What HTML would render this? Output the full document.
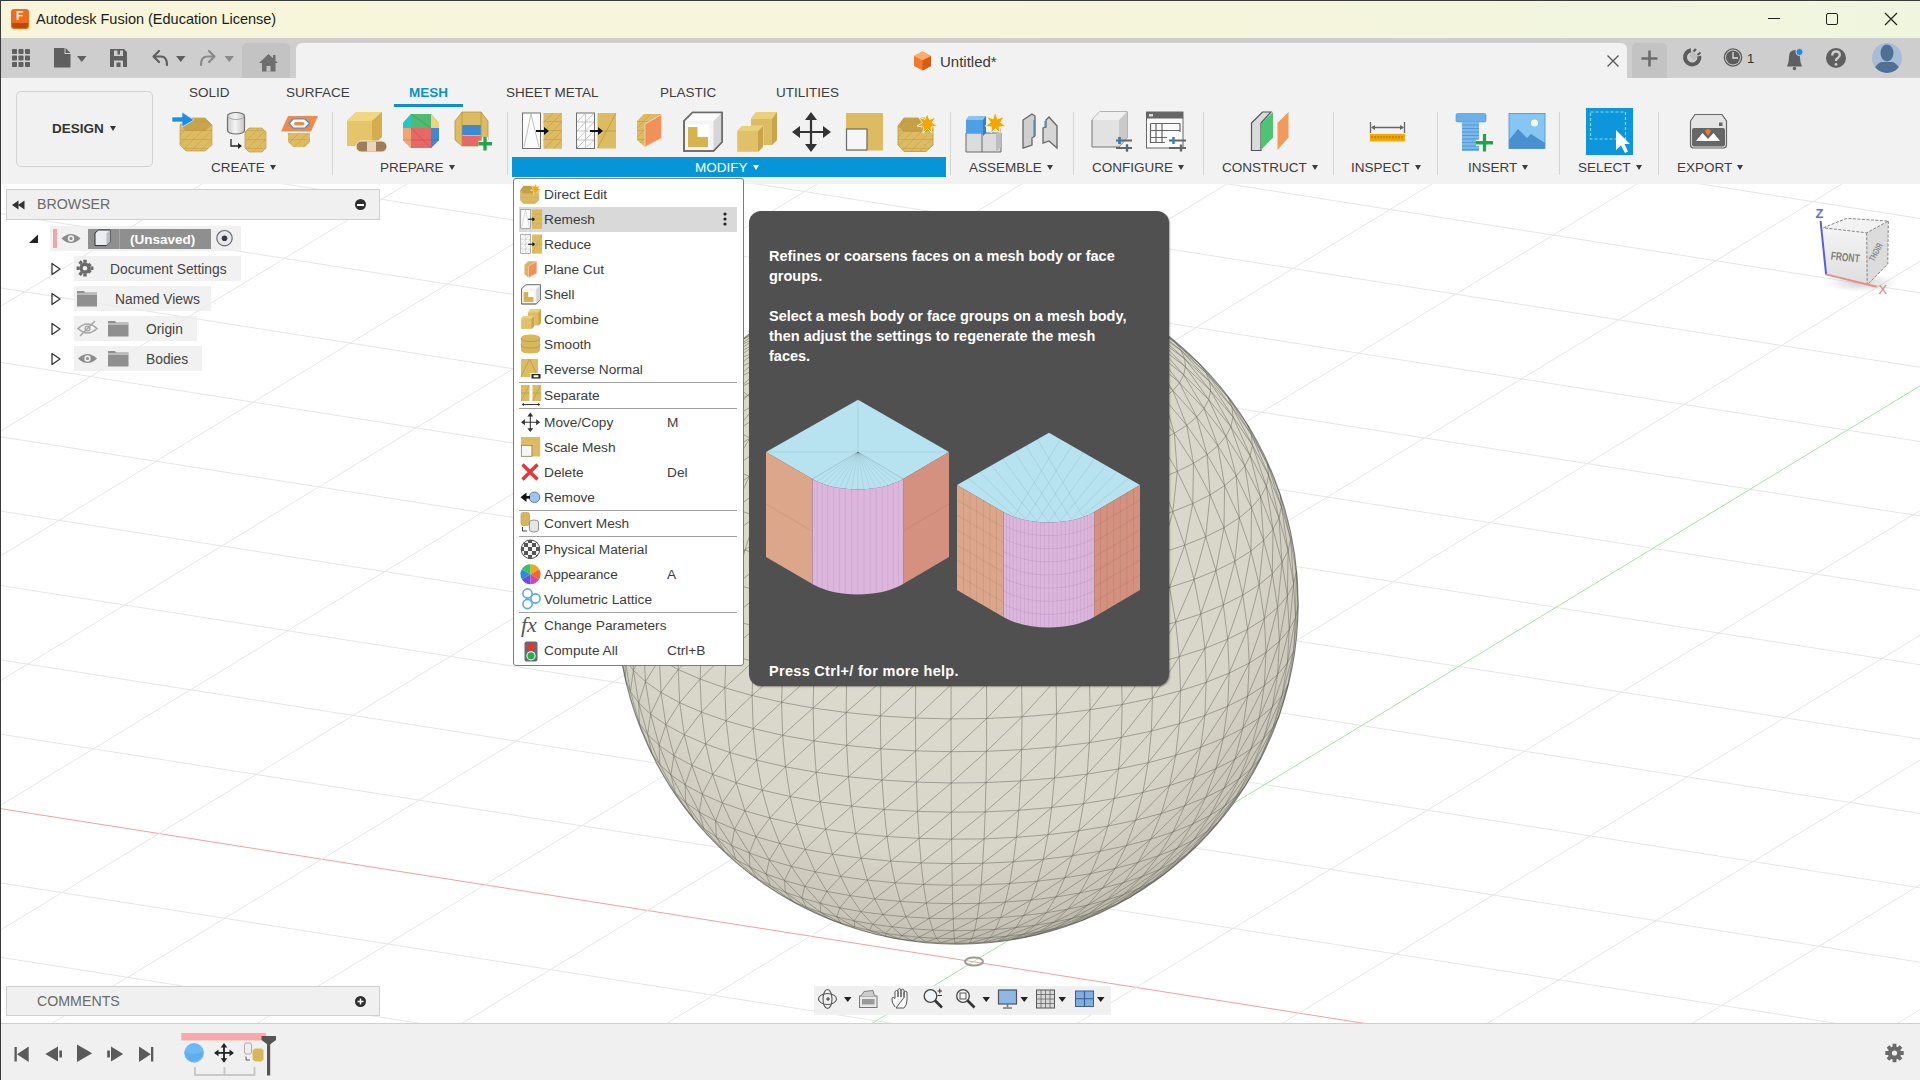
<!DOCTYPE html>
<html><head><meta charset="utf-8">
<style>
*{box-sizing:border-box;margin:0;padding:0}
html,body{width:1920px;height:1080px;overflow:hidden;background:#fff;font-family:"Liberation Sans",sans-serif}
.a{position:absolute}
svg{position:absolute;overflow:visible}
.t{position:absolute;white-space:nowrap;line-height:1}
#title{left:0;top:0;width:1920px;height:38px;background:linear-gradient(90deg,#f8f5da,#f7f5dc 50%,#f0f6de);border-top:1px solid #3b3b3b}
#qat{left:0;top:38px;width:1920px;height:40px;background:#cecece}
#ribbon{left:0;top:78px;width:1920px;height:106px;background:#f2f2f2}
#view{left:0;top:184px;width:1920px;height:840px;background:#fff;overflow:hidden}
#bottom{left:0;top:1023px;width:1920px;height:57px;background:#f0f0f0;border-top:1px solid #cfcfcf}
.tab{font-size:13.5px;color:#3c3c3c;top:85.5px}
.grp{font-size:13.5px;color:#3c3c3c;top:160.5px}
.dd{display:inline-block;width:0;height:0;border-left:3.2px solid transparent;border-right:3.2px solid transparent;border-top:5px solid currentColor;margin-left:5px;vertical-align:2px}
.sep{position:absolute;width:1px;background:#d4d4d4;top:112px;height:63px}
.mi{position:absolute;left:544px;font-size:13.7px;margin-top:1px;color:#3c3c3c;white-space:nowrap;line-height:1}
.ms{position:absolute;left:667px;font-size:13.7px;margin-top:1px;color:#3c3c3c;white-space:nowrap;line-height:1}
.msep{position:absolute;left:519px;width:218px;height:1px;background:#a0a0a0}
.tt{position:absolute;left:769px;font-size:14.5px;font-weight:bold;color:#fff;white-space:nowrap;line-height:1}
</style></head><body>
<!-- viewport -->
<div id="view" class="a">
<svg width="1920" height="840" style="left:0;top:0" viewBox="0 184 1920 840">
<line x1="0" y1="957.2" x2="1920" y2="1259.7" stroke="#e6e6e6" stroke-width="1"/>
<line x1="0" y1="882.9" x2="1920" y2="1185.3" stroke="#e6e6e6" stroke-width="1"/>
<line x1="0" y1="808.5" x2="1920" y2="1110.9" stroke="#f2a0a0" stroke-width="1"/>
<line x1="0" y1="734.1" x2="1920" y2="1036.6" stroke="#e6e6e6" stroke-width="1"/>
<line x1="0" y1="659.8" x2="1920" y2="962.2" stroke="#e6e6e6" stroke-width="1"/>
<line x1="0" y1="585.4" x2="1920" y2="887.8" stroke="#e6e6e6" stroke-width="1"/>
<line x1="0" y1="511.0" x2="1920" y2="813.5" stroke="#e6e6e6" stroke-width="1"/>
<line x1="0" y1="436.7" x2="1920" y2="739.1" stroke="#e6e6e6" stroke-width="1"/>
<line x1="0" y1="362.3" x2="1920" y2="664.7" stroke="#e6e6e6" stroke-width="1"/>
<line x1="0" y1="287.9" x2="1920" y2="590.4" stroke="#e6e6e6" stroke-width="1"/>
<line x1="0" y1="213.6" x2="1920" y2="516.0" stroke="#e6e6e6" stroke-width="1"/>
<line x1="0" y1="139.2" x2="1920" y2="441.6" stroke="#e6e6e6" stroke-width="1"/>
<line x1="0" y1="64.8" x2="1920" y2="367.3" stroke="#e6e6e6" stroke-width="1"/>
<line x1="0" y1="-9.5" x2="1920" y2="292.9" stroke="#e6e6e6" stroke-width="1"/>
<line x1="0" y1="-83.9" x2="1920" y2="218.5" stroke="#e6e6e6" stroke-width="1"/>
<line x1="0" y1="306.8" x2="1920" y2="-861.1" stroke="#e6e6e6" stroke-width="1"/>
<line x1="0" y1="431.5" x2="1920" y2="-736.4" stroke="#e6e6e6" stroke-width="1"/>
<line x1="0" y1="556.2" x2="1920" y2="-611.7" stroke="#e6e6e6" stroke-width="1"/>
<line x1="0" y1="680.9" x2="1920" y2="-487.0" stroke="#e6e6e6" stroke-width="1"/>
<line x1="0" y1="805.6" x2="1920" y2="-362.3" stroke="#e6e6e6" stroke-width="1"/>
<line x1="0" y1="930.3" x2="1920" y2="-237.6" stroke="#e6e6e6" stroke-width="1"/>
<line x1="0" y1="1055.0" x2="1920" y2="-112.9" stroke="#e6e6e6" stroke-width="1"/>
<line x1="0" y1="1179.7" x2="1920" y2="11.8" stroke="#e6e6e6" stroke-width="1"/>
<line x1="0" y1="1304.4" x2="1920" y2="136.5" stroke="#e6e6e6" stroke-width="1"/>
<line x1="0" y1="1429.1" x2="1920" y2="261.2" stroke="#e6e6e6" stroke-width="1"/>
<line x1="0" y1="1553.8" x2="1920" y2="385.9" stroke="#a6e2a6" stroke-width="1"/>
<line x1="0" y1="1678.5" x2="1920" y2="510.6" stroke="#e6e6e6" stroke-width="1"/>
<line x1="0" y1="1803.2" x2="1920" y2="635.3" stroke="#e6e6e6" stroke-width="1"/>
<line x1="0" y1="1927.9" x2="1920" y2="760.0" stroke="#e6e6e6" stroke-width="1"/>
<line x1="0" y1="2052.6" x2="1920" y2="884.8" stroke="#e6e6e6" stroke-width="1"/>
<line x1="0" y1="2177.3" x2="1920" y2="1009.5" stroke="#e6e6e6" stroke-width="1"/>
<defs>
<radialGradient id="sg" cx="0.47" cy="0.40" r="0.62">
<stop offset="0" stop-color="#e0ddd2"/><stop offset="0.75" stop-color="#d8d5c9"/><stop offset="0.93" stop-color="#c8c5b8"/><stop offset="1" stop-color="#aeab9e"/>
</radialGradient>
</defs>
<circle cx="957.5" cy="603.5" r="340.6" fill="url(#sg)"/>
<path d="M886.0 936.4L898.8 938.8M886.0 936.4L869.6 930.4M886.0 936.4L885.3 933.3M898.8 938.8L912.2 940.6M898.8 938.8L885.3 933.3M898.8 938.8L901.8 935.5M912.2 940.6L926.1 942.0M912.2 940.6L901.8 935.5M912.2 940.6L918.9 937.2M926.1 942.0L940.4 942.8M926.1 942.0L918.9 937.2M926.1 942.0L936.5 938.3M940.4 942.8L954.9 943.2M940.4 942.8L936.5 938.3M940.4 942.8L954.3 938.7M954.9 943.2L969.4 943.0M954.9 943.2L954.3 938.7M954.9 943.2L972.1 938.5M969.4 943.0L983.7 942.3M969.4 943.0L972.1 938.5M969.4 943.0L989.7 937.7M983.7 942.3L997.8 941.2M983.7 942.3L989.7 937.7M983.7 942.3L1007.0 936.2M997.8 941.2L1011.4 939.5M997.8 941.2L1007.0 936.2M997.8 941.2L1023.8 934.2M1011.4 939.5L1024.5 937.3M1011.4 939.5L1023.8 934.2M1011.4 939.5L1039.8 931.5M1024.5 937.3L1036.8 934.7M1024.5 937.3L1039.8 931.5M1024.5 937.3L1055.0 928.3M1036.8 934.7L1055.0 928.3M1036.8 934.7L1069.0 924.6M828.8 918.8L841.2 923.2M828.8 918.8L806.2 907.2M828.8 918.8L820.7 912.3M841.2 923.2L854.8 927.0M841.2 923.2L820.7 912.3M841.2 923.2L836.8 916.9M854.8 927.0L869.6 930.4M854.8 927.0L836.8 916.9M854.8 927.0L854.1 920.8M869.6 930.4L885.3 933.3M869.6 930.4L854.1 920.8M869.6 930.4L872.6 924.2M885.3 933.3L901.8 935.5M885.3 933.3L872.6 924.2M885.3 933.3L892.0 926.8M901.8 935.5L918.9 937.2M901.8 935.5L892.0 926.8M901.8 935.5L912.2 928.8M918.9 937.2L936.5 938.3M918.9 937.2L912.2 928.8M918.9 937.2L932.8 930.1M936.5 938.3L954.3 938.7M936.5 938.3L932.8 930.1M936.5 938.3L953.7 930.6M954.3 938.7L972.1 938.5M954.3 938.7L953.7 930.6M954.3 938.7L974.6 930.3M972.1 938.5L989.7 937.7M972.1 938.5L974.6 930.3M972.1 938.5L995.4 929.4M989.7 937.7L1007.0 936.2M989.7 937.7L995.4 929.4M989.7 937.7L1015.7 927.6M1007.0 936.2L1023.8 934.2M1007.0 936.2L1015.7 927.6M1007.0 936.2L1035.4 925.2M1023.8 934.2L1039.8 931.5M1023.8 934.2L1035.4 925.2M1023.8 934.2L1054.3 922.1M1039.8 931.5L1055.0 928.3M1039.8 931.5L1054.3 922.1M1039.8 931.5L1072.1 918.4M1055.0 928.3L1069.0 924.6M1055.0 928.3L1072.1 918.4M1055.0 928.3L1088.6 914.0M1069.0 924.6L1081.9 920.4M1069.0 924.6L1088.6 914.0M1069.0 924.6L1103.7 909.1M1081.9 920.4L1103.7 909.1M1081.9 920.4L1117.2 903.7M793.3 901.6L806.2 907.2M793.3 901.6L770.6 885.8M793.3 901.6L785.3 892.2M806.2 907.2L820.7 912.3M806.2 907.2L785.3 892.2M806.2 907.2L801.8 898.0M820.7 912.3L836.8 916.9M820.7 912.3L801.8 898.0M820.7 912.3L820.1 903.2M836.8 916.9L854.1 920.8M836.8 916.9L820.1 903.2M836.8 916.9L839.8 907.8M854.1 920.8L872.6 924.2M854.1 920.8L839.8 907.8M854.1 920.8L860.9 911.6M872.6 924.2L892.0 926.8M872.6 924.2L860.9 911.6M872.6 924.2L883.0 914.6M892.0 926.8L912.2 928.8M892.0 926.8L883.0 914.6M892.0 926.8L905.9 916.8M912.2 928.8L932.8 930.1M912.2 928.8L905.9 916.8M912.2 928.8L929.4 918.3M932.8 930.1L953.7 930.6M932.8 930.1L929.4 918.3M932.8 930.1L953.2 918.8M953.7 930.6L974.6 930.3M953.7 930.6L953.2 918.8M953.7 930.6L977.0 918.6M974.6 930.3L995.4 929.4M974.6 930.3L977.0 918.6M974.6 930.3L1000.6 917.5M995.4 929.4L1015.7 927.6M995.4 929.4L1000.6 917.5M995.4 929.4L1023.8 915.5M1015.7 927.6L1035.4 925.2M1015.7 927.6L1023.8 915.5M1015.7 927.6L1046.2 912.8M1035.4 925.2L1054.3 922.1M1035.4 925.2L1046.2 912.8M1035.4 925.2L1067.7 909.2M1054.3 922.1L1072.1 918.4M1054.3 922.1L1067.7 909.2M1054.3 922.1L1087.9 905.0M1072.1 918.4L1088.6 914.0M1072.1 918.4L1087.9 905.0M1072.1 918.4L1106.7 900.0M1088.6 914.0L1103.7 909.1M1088.6 914.0L1106.7 900.0M1088.6 914.0L1123.9 894.4M1103.7 909.1L1117.2 903.7M1103.7 909.1L1123.9 894.4M1103.7 909.1L1139.3 888.2M1117.2 903.7L1128.9 897.8M1117.2 903.7L1139.3 888.2M1117.2 903.7L1152.7 881.5M1128.9 897.8L1152.7 881.5M1128.9 897.8L1163.9 874.4M758.0 879.0L770.6 885.8M758.0 879.0L735.9 859.4M758.0 879.0L749.9 867.0M770.6 885.8L785.3 892.2M770.6 885.8L749.9 867.0M770.6 885.8L766.2 874.1M785.3 892.2L801.8 898.0M785.3 892.2L766.2 874.1M785.3 892.2L784.6 880.5M801.8 898.0L820.1 903.2M801.8 898.0L784.6 880.5M801.8 898.0L804.9 886.3M820.1 903.2L839.8 907.8M820.1 903.2L804.9 886.3M820.1 903.2L826.8 891.4M839.8 907.8L860.9 911.6M839.8 907.8L826.8 891.4M839.8 907.8L850.2 895.6M860.9 911.6L883.0 914.6M860.9 911.6L850.2 895.6M860.9 911.6L874.7 899.0M883.0 914.6L905.9 916.8M883.0 914.6L874.7 899.0M883.0 914.6L900.2 901.4M905.9 916.8L929.4 918.3M905.9 916.8L900.2 901.4M905.9 916.8L926.3 903.0M929.4 918.3L953.2 918.8M929.4 918.3L926.3 903.0M929.4 918.3L952.7 903.7M953.2 918.8L977.0 918.6M953.2 918.8L952.7 903.7M953.2 918.8L979.2 903.4M977.0 918.6L1000.6 917.5M977.0 918.6L979.2 903.4M977.0 918.6L1005.4 902.1M1000.6 917.5L1023.8 915.5M1000.6 917.5L1005.4 902.1M1000.6 917.5L1031.1 900.0M1023.8 915.5L1046.2 912.8M1023.8 915.5L1031.1 900.0M1023.8 915.5L1056.0 896.9M1046.2 912.8L1067.7 909.2M1046.2 912.8L1056.0 896.9M1046.2 912.8L1079.9 893.0M1067.7 909.2L1087.9 905.0M1067.7 909.2L1079.9 893.0M1067.7 909.2L1102.4 888.2M1087.9 905.0L1106.7 900.0M1087.9 905.0L1102.4 888.2M1087.9 905.0L1123.3 882.7M1106.7 900.0L1123.9 894.4M1106.7 900.0L1123.3 882.7M1106.7 900.0L1142.3 876.5M1123.9 894.4L1139.3 888.2M1123.9 894.4L1142.3 876.5M1123.9 894.4L1159.4 869.6M1139.3 888.2L1152.7 881.5M1139.3 888.2L1159.4 869.6M1139.3 888.2L1174.3 862.2M1152.7 881.5L1163.9 874.4M1152.7 881.5L1174.3 862.2M1152.7 881.5L1186.7 854.3M1163.9 874.4L1186.7 854.3M1163.9 874.4L1196.7 846.0M724.4 851.3L735.9 859.4M724.4 851.3L703.7 828.2M724.4 851.3L716.3 837.0M735.9 859.4L749.9 867.0M735.9 859.4L716.3 837.0M735.9 859.4L731.5 845.3M749.9 867.0L766.2 874.1M749.9 867.0L731.5 845.3M749.9 867.0L749.3 853.0M766.2 874.1L784.6 880.5M766.2 874.1L749.3 853.0M766.2 874.1L769.3 860.0M784.6 880.5L804.9 886.3M784.6 880.5L769.3 860.0M784.6 880.5L791.3 866.3M804.9 886.3L826.8 891.4M804.9 886.3L791.3 866.3M804.9 886.3L815.2 871.8M826.8 891.4L850.2 895.6M826.8 891.4L815.2 871.8M826.8 891.4L840.7 876.4M850.2 895.6L874.7 899.0M850.2 895.6L840.7 876.4M850.2 895.6L867.4 880.1M874.7 899.0L900.2 901.4M874.7 899.0L867.4 880.1M874.7 899.0L895.1 882.8M900.2 901.4L926.3 903.0M900.2 901.4L895.1 882.8M900.2 901.4L923.5 884.5M926.3 903.0L952.7 903.7M926.3 903.0L923.5 884.5M926.3 903.0L952.3 885.2M952.7 903.7L979.2 903.4M952.7 903.7L952.3 885.2M952.7 903.7L981.1 884.9M979.2 903.4L1005.4 902.1M979.2 903.4L981.1 884.9M979.2 903.4L1009.7 883.5M1005.4 902.1L1031.1 900.0M1005.4 902.1L1009.7 883.5M1005.4 902.1L1037.6 881.2M1031.1 900.0L1056.0 896.9M1031.1 900.0L1037.6 881.2M1031.1 900.0L1064.8 877.8M1056.0 896.9L1079.9 893.0M1056.0 896.9L1064.8 877.8M1056.0 896.9L1090.7 873.6M1079.9 893.0L1102.4 888.2M1079.9 893.0L1090.7 873.6M1079.9 893.0L1115.2 868.4M1102.4 888.2L1123.3 882.7M1102.4 888.2L1115.2 868.4M1102.4 888.2L1138.0 862.4M1123.3 882.7L1142.3 876.5M1123.3 882.7L1138.0 862.4M1123.3 882.7L1158.7 855.6M1142.3 876.5L1159.4 869.6M1142.3 876.5L1158.7 855.6M1142.3 876.5L1177.3 848.2M1159.4 869.6L1174.3 862.2M1159.4 869.6L1177.3 848.2M1159.4 869.6L1193.5 840.1M1174.3 862.2L1186.7 854.3M1174.3 862.2L1193.5 840.1M1174.3 862.2L1207.1 831.4M1186.7 854.3L1196.7 846.0M1186.7 854.3L1207.1 831.4M1186.7 854.3L1217.9 822.4M1196.7 846.0L1217.9 822.4M693.9 819.0L703.7 828.2M693.9 819.0L675.3 792.8M693.9 819.0L685.8 802.6M703.7 828.2L716.3 837.0M703.7 828.2L685.8 802.6M703.7 828.2L699.3 812.0M716.3 837.0L731.5 845.3M716.3 837.0L699.3 812.0M716.3 837.0L715.6 820.9M731.5 845.3L749.3 853.0M731.5 845.3L715.6 820.9M731.5 845.3L734.6 829.2M749.3 853.0L769.3 860.0M749.3 853.0L734.6 829.2M749.3 853.0L756.0 836.7M769.3 860.0L791.3 866.3M769.3 860.0L756.0 836.7M769.3 860.0L779.6 843.4M791.3 866.3L815.2 871.8M791.3 866.3L779.6 843.4M791.3 866.3L805.2 849.3M815.2 871.8L840.7 876.4M815.2 871.8L805.2 849.3M815.2 871.8L832.4 854.2M840.7 876.4L867.4 880.1M840.7 876.4L832.4 854.2M840.7 876.4L861.0 858.2M867.4 880.1L895.1 882.8M867.4 880.1L861.0 858.2M867.4 880.1L890.7 861.1M895.1 882.8L923.5 884.5M895.1 882.8L890.7 861.1M895.1 882.8L921.1 862.9M923.5 884.5L952.3 885.2M923.5 884.5L921.1 862.9M923.5 884.5L951.9 863.6M952.3 885.2L981.1 884.9M952.3 885.2L951.9 863.6M952.3 885.2L982.7 863.3M981.1 884.9L1009.7 883.5M981.1 884.9L982.7 863.3M981.1 884.9L1013.3 861.8M1009.7 883.5L1037.6 881.2M1009.7 883.5L1013.3 861.8M1009.7 883.5L1043.3 859.3M1037.6 881.2L1064.8 877.8M1037.6 881.2L1043.3 859.3M1037.6 881.2L1072.3 855.8M1064.8 877.8L1090.7 873.6M1064.8 877.8L1072.3 855.8M1064.8 877.8L1100.1 851.2M1090.7 873.6L1115.2 868.4M1090.7 873.6L1100.1 851.2M1090.7 873.6L1126.3 845.7M1115.2 868.4L1138.0 862.4M1115.2 868.4L1126.3 845.7M1115.2 868.4L1150.7 839.2M1138.0 862.4L1158.7 855.6M1138.0 862.4L1150.7 839.2M1138.0 862.4L1172.9 832.0M1158.7 855.6L1177.3 848.2M1158.7 855.6L1172.9 832.0M1158.7 855.6L1192.8 824.0M1177.3 848.2L1193.5 840.1M1177.3 848.2L1192.8 824.0M1177.3 848.2L1210.1 815.3M1193.5 840.1L1207.1 831.4M1193.5 840.1L1210.1 815.3M1193.5 840.1L1224.6 806.1M1207.1 831.4L1217.9 822.4M1207.1 831.4L1224.6 806.1M1207.1 831.4L1236.2 796.4M1217.9 822.4L1236.2 796.4M1217.9 822.4L1244.8 786.4M675.3 792.8L685.8 802.6M675.3 792.8L659.8 764.5M675.3 792.8L670.9 774.9M685.8 802.6L699.3 812.0M685.8 802.6L670.9 774.9M685.8 802.6L685.1 784.8M699.3 812.0L715.6 820.9M699.3 812.0L685.1 784.8M699.3 812.0L702.3 794.2M715.6 820.9L734.6 829.2M715.6 820.9L702.3 794.2M715.6 820.9L722.3 802.9M734.6 829.2L756.0 836.7M734.6 829.2L722.3 802.9M734.6 829.2L744.9 810.8M756.0 836.7L779.6 843.4M756.0 836.7L744.9 810.8M756.0 836.7L769.9 817.9M779.6 843.4L805.2 849.3M779.6 843.4L769.9 817.9M779.6 843.4L796.8 824.1M805.2 849.3L832.4 854.2M805.2 849.3L796.8 824.1M805.2 849.3L825.6 829.3M832.4 854.2L861.0 858.2M832.4 854.2L825.6 829.3M832.4 854.2L855.7 833.4M861.0 858.2L890.7 861.1M861.0 858.2L855.7 833.4M861.0 858.2L887.0 836.5M890.7 861.1L921.1 862.9M890.7 861.1L887.0 836.5M890.7 861.1L919.1 838.4M921.1 862.9L951.9 863.6M921.1 862.9L919.1 838.4M921.1 862.9L951.6 839.2M951.9 863.6L982.7 863.3M951.9 863.6L951.6 839.2M951.9 863.6L984.1 838.9M982.7 863.3L1013.3 861.8M982.7 863.3L984.1 838.9M982.7 863.3L1016.4 837.3M1013.3 861.8L1043.3 859.3M1013.3 861.8L1016.4 837.3M1013.3 861.8L1048.0 834.7M1043.3 859.3L1072.3 855.8M1043.3 859.3L1048.0 834.7M1043.3 859.3L1078.6 830.9M1072.3 855.8L1100.1 851.2M1072.3 855.8L1078.6 830.9M1072.3 855.8L1107.9 826.1M1100.1 851.2L1126.3 845.7M1100.1 851.2L1107.9 826.1M1100.1 851.2L1135.6 820.3M1126.3 845.7L1150.7 839.2M1126.3 845.7L1135.6 820.3M1126.3 845.7L1161.3 813.5M1150.7 839.2L1172.9 832.0M1150.7 839.2L1161.3 813.5M1150.7 839.2L1184.7 805.8M1172.9 832.0L1192.8 824.0M1172.9 832.0L1184.7 805.8M1172.9 832.0L1205.7 797.4M1192.8 824.0L1210.1 815.3M1192.8 824.0L1205.7 797.4M1192.8 824.0L1224.0 788.3M1210.1 815.3L1224.6 806.1M1210.1 815.3L1224.0 788.3M1210.1 815.3L1239.3 778.5M1224.6 806.1L1236.2 796.4M1224.6 806.1L1239.3 778.5M1224.6 806.1L1251.5 768.3M1236.2 796.4L1244.8 786.4M1236.2 796.4L1251.5 768.3M1236.2 796.4L1260.6 757.7M1244.8 786.4L1260.6 757.7M652.0 753.8L659.8 764.5M652.0 753.8L639.4 723.3M652.0 753.8L647.6 734.4M659.8 764.5L670.9 774.9M659.8 764.5L647.6 734.4M659.8 764.5L659.1 745.2M670.9 774.9L685.1 784.8M670.9 774.9L659.1 745.2M670.9 774.9L673.9 755.6M685.1 784.8L702.3 794.2M685.1 784.8L673.9 755.6M685.1 784.8L691.9 765.3M702.3 794.2L722.3 802.9M702.3 794.2L691.9 765.3M702.3 794.2L712.7 774.4M722.3 802.9L744.9 810.8M722.3 802.9L712.7 774.4M722.3 802.9L736.2 782.7M744.9 810.8L769.9 817.9M744.9 810.8L736.2 782.7M744.9 810.8L762.1 790.1M769.9 817.9L796.8 824.1M769.9 817.9L762.1 790.1M769.9 817.9L790.2 796.5M796.8 824.1L825.6 829.3M796.8 824.1L790.2 796.5M796.8 824.1L820.1 801.9M825.6 829.3L855.7 833.4M825.6 829.3L820.1 801.9M825.6 829.3L851.6 806.2M855.7 833.4L887.0 836.5M855.7 833.4L851.6 806.2M855.7 833.4L884.1 809.4M887.0 836.5L919.1 838.4M887.0 836.5L884.1 809.4M887.0 836.5L917.5 811.4M919.1 838.4L951.6 839.2M919.1 838.4L917.5 811.4M919.1 838.4L951.3 812.2M951.6 839.2L984.1 838.9M951.6 839.2L951.3 812.2M951.6 839.2L985.2 811.9M984.1 838.9L1016.4 837.3M984.1 838.9L985.2 811.9M984.1 838.9L1018.8 810.3M1016.4 837.3L1048.0 834.7M1016.4 837.3L1018.8 810.3M1016.4 837.3L1051.7 807.5M1048.0 834.7L1078.6 830.9M1048.0 834.7L1051.7 807.5M1048.0 834.7L1083.6 803.6M1078.6 830.9L1107.9 826.1M1078.6 830.9L1083.6 803.6M1078.6 830.9L1114.1 798.6M1107.9 826.1L1135.6 820.3M1107.9 826.1L1114.1 798.6M1107.9 826.1L1142.9 792.5M1135.6 820.3L1161.3 813.5M1135.6 820.3L1142.9 792.5M1135.6 820.3L1169.6 785.5M1161.3 813.5L1184.7 805.8M1161.3 813.5L1169.6 785.5M1161.3 813.5L1194.1 777.5M1184.7 805.8L1205.7 797.4M1184.7 805.8L1194.1 777.5M1184.7 805.8L1215.9 768.7M1205.7 797.4L1224.0 788.3M1205.7 797.4L1215.9 768.7M1205.7 797.4L1234.9 759.2M1224.0 788.3L1239.3 778.5M1224.0 788.3L1234.9 759.2M1224.0 788.3L1250.9 749.1M1239.3 778.5L1251.5 768.3M1239.3 778.5L1250.9 749.1M1239.3 778.5L1263.6 738.4M1251.5 768.3L1260.6 757.7M1251.5 768.3L1263.6 738.4M1251.5 768.3L1273.0 727.4M1260.6 757.7L1273.0 727.4M1260.6 757.7L1279.0 716.1M639.4 723.3L647.6 734.4M639.4 723.3L630.4 691.5M639.4 723.3L638.7 703.0M647.6 734.4L659.1 745.2M647.6 734.4L638.7 703.0M647.6 734.4L650.6 714.1M659.1 745.2L673.9 755.6M659.1 745.2L650.6 714.1M659.1 745.2L665.9 724.7M673.9 755.6L691.9 765.3M673.9 755.6L665.9 724.7M673.9 755.6L684.3 734.7M691.9 765.3L712.7 774.4M691.9 765.3L684.3 734.7M691.9 765.3L705.7 744.0M712.7 774.4L736.2 782.7M712.7 774.4L705.7 744.0M712.7 774.4L729.9 752.5M736.2 782.7L762.1 790.1M736.2 782.7L729.9 752.5M736.2 782.7L756.6 760.1M762.1 790.1L790.2 796.5M762.1 790.1L756.6 760.1M762.1 790.1L785.5 766.8M790.2 796.5L820.1 801.9M790.2 796.5L785.5 766.8M790.2 796.5L816.2 772.3M820.1 801.9L851.6 806.2M820.1 801.9L816.2 772.3M820.1 801.9L848.5 776.8M851.6 806.2L884.1 809.4M851.6 806.2L848.5 776.8M851.6 806.2L882.0 780.0M884.1 809.4L917.5 811.4M884.1 809.4L882.0 780.0M884.1 809.4L916.4 782.1M917.5 811.4L951.3 812.2M917.5 811.4L916.4 782.1M917.5 811.4L951.2 783.0M951.3 812.2L985.2 811.9M951.3 812.2L951.2 783.0M951.3 812.2L986.0 782.6M985.2 811.9L1018.8 810.3M985.2 811.9L986.0 782.6M985.2 811.9L1020.6 780.9M1018.8 810.3L1051.7 807.5M1018.8 810.3L1020.6 780.9M1018.8 810.3L1054.4 778.1M1051.7 807.5L1083.6 803.6M1051.7 807.5L1054.4 778.1M1051.7 807.5L1087.2 774.1M1083.6 803.6L1114.1 798.6M1083.6 803.6L1087.2 774.1M1083.6 803.6L1118.6 768.9M1114.1 798.6L1142.9 792.5M1114.1 798.6L1118.6 768.9M1114.1 798.6L1148.2 762.7M1142.9 792.5L1169.6 785.5M1142.9 792.5L1148.2 762.7M1142.9 792.5L1175.7 755.4M1169.6 785.5L1194.1 777.5M1169.6 785.5L1175.7 755.4M1169.6 785.5L1200.8 747.2M1194.1 777.5L1215.9 768.7M1194.1 777.5L1200.8 747.2M1194.1 777.5L1223.3 738.2M1215.9 768.7L1234.9 759.2M1215.9 768.7L1223.3 738.2M1215.9 768.7L1242.8 728.4M1234.9 759.2L1250.9 749.1M1234.9 759.2L1242.8 728.4M1234.9 759.2L1259.2 718.0M1250.9 749.1L1263.6 738.4M1250.9 749.1L1259.2 718.0M1250.9 749.1L1272.3 707.0M1263.6 738.4L1273.0 727.4M1263.6 738.4L1272.3 707.0M1263.6 738.4L1282.0 695.7M1273.0 727.4L1279.0 716.1M1273.0 727.4L1282.0 695.7M1273.0 727.4L1288.1 684.1M1279.0 716.1L1288.1 684.1M625.6 679.8L630.4 691.5M625.6 679.8L620.0 646.8M625.6 679.8L624.9 658.7M630.4 691.5L638.7 703.0M630.4 691.5L624.9 658.7M630.4 691.5L633.4 670.4M638.7 703.0L650.6 714.1M638.7 703.0L633.4 670.4M638.7 703.0L645.5 681.7M650.6 714.1L665.9 724.7M650.6 714.1L645.5 681.7M650.6 714.1L661.0 692.5M665.9 724.7L684.3 734.7M665.9 724.7L661.0 692.5M665.9 724.7L679.7 702.7M684.3 734.7L705.7 744.0M684.3 734.7L679.7 702.7M684.3 734.7L701.5 712.1M705.7 744.0L729.9 752.5M705.7 744.0L701.5 712.1M705.7 744.0L726.1 720.8M729.9 752.5L756.6 760.1M729.9 752.5L726.1 720.8M729.9 752.5L753.2 728.5M756.6 760.1L785.5 766.8M756.6 760.1L753.2 728.5M756.6 760.1L782.6 735.3M785.5 766.8L816.2 772.3M785.5 766.8L782.6 735.3M785.5 766.8L813.9 740.9M816.2 772.3L848.5 776.8M816.2 772.3L813.9 740.9M816.2 772.3L846.7 745.4M848.5 776.8L882.0 780.0M848.5 776.8L846.7 745.4M848.5 776.8L880.8 748.8M882.0 780.0L916.4 782.1M882.0 780.0L880.8 748.8M882.0 780.0L915.7 750.9M916.4 782.1L951.2 783.0M916.4 782.1L915.7 750.9M916.4 782.1L951.1 751.7M951.2 783.0L986.0 782.6M951.2 783.0L951.1 751.7M951.2 783.0L986.5 751.3M986.0 782.6L1020.6 780.9M986.0 782.6L986.5 751.3M986.0 782.6L1021.6 749.7M1020.6 780.9L1054.4 778.1M1020.6 780.9L1021.6 749.7M1020.6 780.9L1056.0 746.8M1054.4 778.1L1087.2 774.1M1054.4 778.1L1056.0 746.8M1054.4 778.1L1089.4 742.7M1087.2 774.1L1118.6 768.9M1087.2 774.1L1089.4 742.7M1087.2 774.1L1121.3 737.4M1118.6 768.9L1148.2 762.7M1118.6 768.9L1121.3 737.4M1118.6 768.9L1151.4 731.1M1148.2 762.7L1175.7 755.4M1148.2 762.7L1151.4 731.1M1148.2 762.7L1179.3 723.7M1175.7 755.4L1200.8 747.2M1175.7 755.4L1179.3 723.7M1175.7 755.4L1204.9 715.4M1200.8 747.2L1223.3 738.2M1200.8 747.2L1204.9 715.4M1200.8 747.2L1227.7 706.2M1223.3 738.2L1242.8 728.4M1223.3 738.2L1227.7 706.2M1223.3 738.2L1247.6 696.2M1242.8 728.4L1259.2 718.0M1242.8 728.4L1247.6 696.2M1242.8 728.4L1264.3 685.7M1259.2 718.0L1272.3 707.0M1259.2 718.0L1264.3 685.7M1259.2 718.0L1277.6 674.5M1272.3 707.0L1282.0 695.7M1272.3 707.0L1277.6 674.5M1272.3 707.0L1287.4 663.0M1282.0 695.7L1288.1 684.1M1282.0 695.7L1287.4 663.0M1282.0 695.7L1293.6 651.2M1288.1 684.1L1293.6 651.2M620.0 646.8L624.9 658.7M620.0 646.8L618.1 613.4M620.0 646.8L623.1 625.3M624.9 658.7L633.4 670.4M624.9 658.7L623.1 625.3M624.9 658.7L631.6 637.1M633.4 670.4L645.5 681.7M633.4 670.4L631.6 637.1M633.4 670.4L643.8 648.4M645.5 681.7L661.0 692.5M645.5 681.7L643.8 648.4M645.5 681.7L659.3 659.3M661.0 692.5L679.7 702.7M661.0 692.5L659.3 659.3M661.0 692.5L678.2 669.5M679.7 702.7L701.5 712.1M679.7 702.7L678.2 669.5M679.7 702.7L700.1 679.1M701.5 712.1L726.1 720.8M701.5 712.1L700.1 679.1M701.5 712.1L724.8 687.8M726.1 720.8L753.2 728.5M726.1 720.8L724.8 687.8M726.1 720.8L752.1 695.5M753.2 728.5L782.6 735.3M753.2 728.5L752.1 695.5M753.2 728.5L781.6 702.3M782.6 735.3L813.9 740.9M782.6 735.3L781.6 702.3M782.6 735.3L813.1 708.0M813.9 740.9L846.7 745.4M813.9 740.9L813.1 708.0M813.9 740.9L846.1 712.5M846.7 745.4L880.8 748.8M846.7 745.4L846.1 712.5M846.7 745.4L880.4 715.9M880.8 748.8L915.7 750.9M880.8 748.8L880.4 715.9M880.8 748.8L915.5 718.0M915.7 750.9L951.1 751.7M915.7 750.9L915.5 718.0M915.7 750.9L951.0 718.9M951.1 751.7L986.5 751.3M951.1 751.7L951.0 718.9M951.1 751.7L986.7 718.5M986.5 751.3L1021.6 749.7M986.5 751.3L986.7 718.5M986.5 751.3L1022.0 716.8M1021.6 749.7L1056.0 746.8M1021.6 749.7L1022.0 716.8M1021.6 749.7L1056.6 713.9M1056.0 746.8L1089.4 742.7M1056.0 746.8L1056.6 713.9M1056.0 746.8L1090.1 709.8M1089.4 742.7L1121.3 737.4M1089.4 742.7L1090.1 709.8M1089.4 742.7L1122.2 704.5M1121.3 737.4L1151.4 731.1M1121.3 737.4L1122.2 704.5M1121.3 737.4L1152.4 698.1M1151.4 731.1L1179.3 723.7M1151.4 731.1L1152.4 698.1M1151.4 731.1L1180.5 690.7M1179.3 723.7L1204.9 715.4M1179.3 723.7L1180.5 690.7M1179.3 723.7L1206.2 682.3M1204.9 715.4L1227.7 706.2M1204.9 715.4L1206.2 682.3M1204.9 715.4L1229.2 673.1M1227.7 706.2L1247.6 696.2M1227.7 706.2L1229.2 673.1M1227.7 706.2L1249.2 663.1M1247.6 696.2L1264.3 685.7M1247.6 696.2L1249.2 663.1M1247.6 696.2L1266.0 652.4M1264.3 685.7L1277.6 674.5M1264.3 685.7L1266.0 652.4M1264.3 685.7L1279.4 641.2M1277.6 674.5L1287.4 663.0M1277.6 674.5L1279.4 641.2M1277.6 674.5L1289.2 629.6M1287.4 663.0L1293.6 651.2M1287.4 663.0L1289.2 629.6M1287.4 663.0L1295.5 617.7M1293.6 651.2L1295.5 617.7M1293.6 651.2L1298.0 605.7M1298.0 605.7L1296.2 572.2M618.1 613.4L623.1 625.3M618.1 613.4L620.0 579.8M618.1 613.4L624.9 591.7M623.1 625.3L631.6 637.1M623.1 625.3L624.9 591.7M623.1 625.3L633.4 603.4M631.6 637.1L643.8 648.4M631.6 637.1L633.4 603.4M631.6 637.1L645.5 614.7M643.8 648.4L659.3 659.3M643.8 648.4L645.5 614.7M643.8 648.4L661.0 625.5M659.3 659.3L678.2 669.5M659.3 659.3L661.0 625.5M659.3 659.3L679.7 635.7M678.2 669.5L700.1 679.1M678.2 669.5L679.7 635.7M678.2 669.5L701.5 645.1M700.1 679.1L724.8 687.8M700.1 679.1L701.5 645.1M700.1 679.1L726.1 653.8M724.8 687.8L752.1 695.5M724.8 687.8L726.1 653.8M724.8 687.8L753.2 661.5M752.1 695.5L781.6 702.3M752.1 695.5L753.2 661.5M752.1 695.5L782.6 668.3M781.6 702.3L813.1 708.0M781.6 702.3L782.6 668.3M781.6 702.3L813.9 673.9M813.1 708.0L846.1 712.5M813.1 708.0L813.9 673.9M813.1 708.0L846.7 678.4M846.1 712.5L880.4 715.9M846.1 712.5L846.7 678.4M846.1 712.5L880.8 681.8M880.4 715.9L915.5 718.0M880.4 715.9L880.8 681.8M880.4 715.9L915.7 683.9M915.5 718.0L951.0 718.9M915.5 718.0L915.7 683.9M915.5 718.0L951.1 684.7M951.0 718.9L986.7 718.5M951.0 718.9L951.1 684.7M951.0 718.9L986.5 684.3M986.7 718.5L1022.0 716.8M986.7 718.5L986.5 684.3M986.7 718.5L1021.6 682.7M1022.0 716.8L1056.6 713.9M1022.0 716.8L1021.6 682.7M1022.0 716.8L1056.0 679.8M1056.6 713.9L1090.1 709.8M1056.6 713.9L1056.0 679.8M1056.6 713.9L1089.4 675.7M1090.1 709.8L1122.2 704.5M1090.1 709.8L1089.4 675.7M1090.1 709.8L1121.3 670.4M1122.2 704.5L1152.4 698.1M1122.2 704.5L1121.3 670.4M1122.2 704.5L1151.4 664.1M1152.4 698.1L1180.5 690.7M1152.4 698.1L1151.4 664.1M1152.4 698.1L1179.3 656.7M1180.5 690.7L1206.2 682.3M1180.5 690.7L1179.3 656.7M1180.5 690.7L1204.9 648.4M1206.2 682.3L1229.2 673.1M1206.2 682.3L1204.9 648.4M1206.2 682.3L1227.7 639.2M1229.2 673.1L1249.2 663.1M1229.2 673.1L1227.7 639.2M1229.2 673.1L1247.6 629.3M1249.2 663.1L1266.0 652.4M1249.2 663.1L1247.6 629.3M1249.2 663.1L1264.3 618.7M1266.0 652.4L1279.4 641.2M1266.0 652.4L1264.3 618.7M1266.0 652.4L1277.6 607.5M1279.4 641.2L1289.2 629.6M1279.4 641.2L1277.6 607.5M1279.4 641.2L1287.4 596.0M1289.2 629.6L1295.5 617.7M1289.2 629.6L1287.4 596.0M1289.2 629.6L1293.6 584.2M1295.5 617.7L1298.0 605.7M1295.5 617.7L1293.6 584.2M1295.5 617.7L1296.2 572.2M1296.2 572.2L1290.6 539.0M618.8 567.8L620.0 579.8M618.8 567.8L624.4 534.7M618.8 567.8L625.6 546.5M620.0 579.8L624.9 591.7M620.0 579.8L625.6 546.5M620.0 579.8L630.4 558.2M624.9 591.7L633.4 603.4M624.9 591.7L630.4 558.2M624.9 591.7L638.7 569.7M633.4 603.4L645.5 614.7M633.4 603.4L638.7 569.7M633.4 603.4L650.6 580.8M645.5 614.7L661.0 625.5M645.5 614.7L650.6 580.8M645.5 614.7L665.9 591.4M661.0 625.5L679.7 635.7M661.0 625.5L665.9 591.4M661.0 625.5L684.3 601.5M679.7 635.7L701.5 645.1M679.7 635.7L684.3 601.5M679.7 635.7L705.7 610.8M701.5 645.1L726.1 653.8M701.5 645.1L705.7 610.8M701.5 645.1L729.9 619.3M726.1 653.8L753.2 661.5M726.1 653.8L729.9 619.3M726.1 653.8L756.6 626.9M753.2 661.5L782.6 668.3M753.2 661.5L756.6 626.9M753.2 661.5L785.5 633.5M782.6 668.3L813.9 673.9M782.6 668.3L785.5 633.5M782.6 668.3L816.2 639.1M813.9 673.9L846.7 678.4M813.9 673.9L816.2 639.1M813.9 673.9L848.5 643.5M846.7 678.4L880.8 681.8M846.7 678.4L848.5 643.5M846.7 678.4L882.0 646.8M880.8 681.8L915.7 683.9M880.8 681.8L882.0 646.8M880.8 681.8L916.4 648.9M915.7 683.9L951.1 684.7M915.7 683.9L916.4 648.9M915.7 683.9L951.2 649.7M951.1 684.7L986.5 684.3M951.1 684.7L951.2 649.7M951.1 684.7L986.0 649.3M986.5 684.3L1021.6 682.7M986.5 684.3L986.0 649.3M986.5 684.3L1020.6 647.7M1021.6 682.7L1056.0 679.8M1021.6 682.7L1020.6 647.7M1021.6 682.7L1054.4 644.8M1056.0 679.8L1089.4 675.7M1056.0 679.8L1054.4 644.8M1056.0 679.8L1087.2 640.8M1089.4 675.7L1121.3 670.4M1089.4 675.7L1087.2 640.8M1089.4 675.7L1118.6 635.7M1121.3 670.4L1151.4 664.1M1121.3 670.4L1118.6 635.7M1121.3 670.4L1148.2 629.4M1151.4 664.1L1179.3 656.7M1151.4 664.1L1148.2 629.4M1151.4 664.1L1175.7 622.2M1179.3 656.7L1204.9 648.4M1179.3 656.7L1175.7 622.2M1179.3 656.7L1200.8 614.0M1204.9 648.4L1227.7 639.2M1204.9 648.4L1200.8 614.0M1204.9 648.4L1223.3 604.9M1227.7 639.2L1247.6 629.3M1227.7 639.2L1223.3 604.9M1227.7 639.2L1242.8 595.1M1247.6 629.3L1264.3 618.7M1247.6 629.3L1242.8 595.1M1247.6 629.3L1259.2 584.7M1264.3 618.7L1277.6 607.5M1264.3 618.7L1259.2 584.7M1264.3 618.7L1272.3 573.8M1277.6 607.5L1287.4 596.0M1277.6 607.5L1272.3 573.8M1277.6 607.5L1282.0 562.4M1287.4 596.0L1293.6 584.2M1287.4 596.0L1282.0 562.4M1287.4 596.0L1288.1 550.8M1293.6 584.2L1296.2 572.2M1293.6 584.2L1288.1 550.8M1293.6 584.2L1290.6 539.0M1290.6 539.0L1281.4 506.6M1290.6 539.0L1280.2 495.1M624.4 534.7L625.6 546.5M624.4 534.7L633.6 502.4M624.4 534.7L634.8 513.9M625.6 546.5L630.4 558.2M625.6 546.5L634.8 513.9M625.6 546.5L639.4 525.2M630.4 558.2L638.7 569.7M630.4 558.2L639.4 525.2M630.4 558.2L647.6 536.4M638.7 569.7L650.6 580.8M638.7 569.7L647.6 536.4M638.7 569.7L659.1 547.2M650.6 580.8L665.9 591.4M650.6 580.8L659.1 547.2M650.6 580.8L673.9 557.5M665.9 591.4L684.3 601.5M665.9 591.4L673.9 557.5M665.9 591.4L691.9 567.3M684.3 601.5L705.7 610.8M684.3 601.5L691.9 567.3M684.3 601.5L712.7 576.3M705.7 610.8L729.9 619.3M705.7 610.8L712.7 576.3M705.7 610.8L736.2 584.6M729.9 619.3L756.6 626.9M729.9 619.3L736.2 584.6M729.9 619.3L762.1 592.0M756.6 626.9L785.5 633.5M756.6 626.9L762.1 592.0M756.6 626.9L790.2 598.4M785.5 633.5L816.2 639.1M785.5 633.5L790.2 598.4M785.5 633.5L820.1 603.8M816.2 639.1L848.5 643.5M816.2 639.1L820.1 603.8M816.2 639.1L851.6 608.2M848.5 643.5L882.0 646.8M848.5 643.5L851.6 608.2M848.5 643.5L884.1 611.3M882.0 646.8L916.4 648.9M882.0 646.8L884.1 611.3M882.0 646.8L917.5 613.4M916.4 648.9L951.2 649.7M916.4 648.9L917.5 613.4M916.4 648.9L951.3 614.2M951.2 649.7L986.0 649.3M951.2 649.7L951.3 614.2M951.2 649.7L985.2 613.8M986.0 649.3L1020.6 647.7M986.0 649.3L985.2 613.8M986.0 649.3L1018.8 612.2M1020.6 647.7L1054.4 644.8M1020.6 647.7L1018.8 612.2M1020.6 647.7L1051.7 609.5M1054.4 644.8L1087.2 640.8M1054.4 644.8L1051.7 609.5M1054.4 644.8L1083.6 605.5M1087.2 640.8L1118.6 635.7M1087.2 640.8L1083.6 605.5M1087.2 640.8L1114.1 600.5M1118.6 635.7L1148.2 629.4M1118.6 635.7L1114.1 600.5M1118.6 635.7L1142.9 594.5M1148.2 629.4L1175.7 622.2M1148.2 629.4L1142.9 594.5M1148.2 629.4L1169.6 587.4M1175.7 622.2L1200.8 614.0M1175.7 622.2L1169.6 587.4M1175.7 622.2L1194.1 579.4M1200.8 614.0L1223.3 604.9M1200.8 614.0L1194.1 579.4M1200.8 614.0L1215.9 570.6M1223.3 604.9L1242.8 595.1M1223.3 604.9L1215.9 570.6M1223.3 604.9L1234.9 561.1M1242.8 595.1L1259.2 584.7M1242.8 595.1L1234.9 561.1M1242.8 595.1L1250.9 551.0M1259.2 584.7L1272.3 573.8M1259.2 584.7L1250.9 551.0M1259.2 584.7L1263.6 540.4M1272.3 573.8L1282.0 562.4M1272.3 573.8L1263.6 540.4M1272.3 573.8L1273.0 529.3M1282.0 562.4L1288.1 550.8M1282.0 562.4L1273.0 529.3M1282.0 562.4L1279.0 518.0M1288.1 550.8L1290.6 539.0M1288.1 550.8L1279.0 518.0M1288.1 550.8L1281.4 506.6M1281.4 506.6L1280.2 495.1M1281.4 506.6L1268.6 475.2M1281.4 506.6L1267.5 464.1M1280.2 495.1L1267.5 464.1M633.6 502.4L634.8 513.9M633.6 502.4L646.4 471.2M633.6 502.4L647.5 482.2M634.8 513.9L639.4 525.2M634.8 513.9L647.5 482.2M634.8 513.9L652.0 493.1M639.4 525.2L647.6 536.4M639.4 525.2L652.0 493.1M639.4 525.2L659.8 503.8M647.6 536.4L659.1 547.2M647.6 536.4L659.8 503.8M647.6 536.4L670.9 514.2M659.1 547.2L673.9 557.5M659.1 547.2L670.9 514.2M659.1 547.2L685.1 524.1M673.9 557.5L691.9 567.3M673.9 557.5L685.1 524.1M673.9 557.5L702.3 533.5M691.9 567.3L712.7 576.3M691.9 567.3L702.3 533.5M691.9 567.3L722.3 542.2M712.7 576.3L736.2 584.6M712.7 576.3L722.3 542.2M712.7 576.3L744.9 550.1M736.2 584.6L762.1 592.0M736.2 584.6L744.9 550.1M736.2 584.6L769.9 557.2M762.1 592.0L790.2 598.4M762.1 592.0L769.9 557.2M762.1 592.0L796.8 563.4M790.2 598.4L820.1 603.8M790.2 598.4L796.8 563.4M790.2 598.4L825.6 568.6M820.1 603.8L851.6 608.2M820.1 603.8L825.6 568.6M820.1 603.8L855.7 572.8M851.6 608.2L884.1 611.3M851.6 608.2L855.7 572.8M851.6 608.2L887.0 575.8M884.1 611.3L917.5 613.4M884.1 611.3L887.0 575.8M884.1 611.3L919.1 577.7M917.5 613.4L951.3 614.2M917.5 613.4L919.1 577.7M917.5 613.4L951.6 578.5M951.3 614.2L985.2 613.8M951.3 614.2L951.6 578.5M951.3 614.2L984.1 578.2M985.2 613.8L1018.8 612.2M985.2 613.8L984.1 578.2M985.2 613.8L1016.4 576.7M1018.8 612.2L1051.7 609.5M1018.8 612.2L1016.4 576.7M1018.8 612.2L1048.0 574.0M1051.7 609.5L1083.6 605.5M1051.7 609.5L1048.0 574.0M1051.7 609.5L1078.6 570.2M1083.6 605.5L1114.1 600.5M1083.6 605.5L1078.6 570.2M1083.6 605.5L1107.9 565.4M1114.1 600.5L1142.9 594.5M1114.1 600.5L1107.9 565.4M1114.1 600.5L1135.6 559.6M1142.9 594.5L1169.6 587.4M1142.9 594.5L1135.6 559.6M1142.9 594.5L1161.3 552.8M1169.6 587.4L1194.1 579.4M1169.6 587.4L1161.3 552.8M1169.6 587.4L1184.7 545.2M1194.1 579.4L1215.9 570.6M1194.1 579.4L1184.7 545.2M1194.1 579.4L1205.7 536.7M1215.9 570.6L1234.9 561.1M1215.9 570.6L1205.7 536.7M1215.9 570.6L1224.0 527.6M1234.9 561.1L1250.9 551.0M1234.9 561.1L1224.0 527.6M1234.9 561.1L1239.3 517.8M1250.9 551.0L1263.6 540.4M1250.9 551.0L1239.3 517.8M1250.9 551.0L1251.5 507.6M1263.6 540.4L1273.0 529.3M1263.6 540.4L1251.5 507.6M1263.6 540.4L1260.6 497.0M1273.0 529.3L1279.0 518.0M1273.0 529.3L1260.6 497.0M1273.0 529.3L1266.3 486.2M1279.0 518.0L1281.4 506.6M1279.0 518.0L1266.3 486.2M1279.0 518.0L1268.6 475.2M1268.6 475.2L1267.5 464.1M1268.6 475.2L1252.4 445.2M1268.6 475.2L1251.4 434.7M1267.5 464.1L1251.4 434.7M1267.5 464.1L1247.1 424.4M648.7 460.1L646.4 471.2M648.7 460.1L664.8 430.9M648.7 460.1L662.6 441.4M646.4 471.2L647.5 482.2M646.4 471.2L662.6 441.4M646.4 471.2L663.6 451.8M647.5 482.2L652.0 493.1M647.5 482.2L663.6 451.8M647.5 482.2L667.9 462.2M652.0 493.1L659.8 503.8M652.0 493.1L667.9 462.2M652.0 493.1L675.3 472.3M659.8 503.8L670.9 514.2M659.8 503.8L675.3 472.3M659.8 503.8L685.8 482.2M670.9 514.2L685.1 524.1M670.9 514.2L685.8 482.2M670.9 514.2L699.3 491.6M685.1 524.1L702.3 533.5M685.1 524.1L699.3 491.6M685.1 524.1L715.6 500.4M702.3 533.5L722.3 542.2M702.3 533.5L715.6 500.4M702.3 533.5L734.6 508.7M722.3 542.2L744.9 550.1M722.3 542.2L734.6 508.7M722.3 542.2L756.0 516.2M744.9 550.1L769.9 557.2M744.9 550.1L756.0 516.2M744.9 550.1L779.6 523.0M769.9 557.2L796.8 563.4M769.9 557.2L779.6 523.0M769.9 557.2L805.2 528.8M796.8 563.4L825.6 568.6M796.8 563.4L805.2 528.8M796.8 563.4L832.4 533.8M825.6 568.6L855.7 572.8M825.6 568.6L832.4 533.8M825.6 568.6L861.0 537.7M855.7 572.8L887.0 575.8M855.7 572.8L861.0 537.7M855.7 572.8L890.7 540.6M887.0 575.8L919.1 577.7M887.0 575.8L890.7 540.6M887.0 575.8L921.1 542.4M919.1 577.7L951.6 578.5M919.1 577.7L921.1 542.4M919.1 577.7L951.9 543.2M951.6 578.5L984.1 578.2M951.6 578.5L951.9 543.2M951.6 578.5L982.7 542.8M984.1 578.2L1016.4 576.7M984.1 578.2L982.7 542.8M984.1 578.2L1013.3 541.4M1016.4 576.7L1048.0 574.0M1016.4 576.7L1013.3 541.4M1016.4 576.7L1043.3 538.9M1048.0 574.0L1078.6 570.2M1048.0 574.0L1043.3 538.9M1048.0 574.0L1072.3 535.3M1078.6 570.2L1107.9 565.4M1078.6 570.2L1072.3 535.3M1078.6 570.2L1100.1 530.7M1107.9 565.4L1135.6 559.6M1107.9 565.4L1100.1 530.7M1107.9 565.4L1126.3 525.2M1135.6 559.6L1161.3 552.8M1135.6 559.6L1126.3 525.2M1135.6 559.6L1150.7 518.8M1161.3 552.8L1184.7 545.2M1161.3 552.8L1150.7 518.8M1161.3 552.8L1172.9 511.5M1184.7 545.2L1205.7 536.7M1184.7 545.2L1172.9 511.5M1184.7 545.2L1192.8 503.5M1205.7 536.7L1224.0 527.6M1205.7 536.7L1192.8 503.5M1205.7 536.7L1210.1 494.9M1224.0 527.6L1239.3 517.8M1224.0 527.6L1210.1 494.9M1224.0 527.6L1224.6 485.6M1239.3 517.8L1251.5 507.6M1239.3 517.8L1224.6 485.6M1239.3 517.8L1236.2 475.9M1251.5 507.6L1260.6 497.0M1251.5 507.6L1236.2 475.9M1251.5 507.6L1244.8 465.9M1260.6 497.0L1266.3 486.2M1260.6 497.0L1244.8 465.9M1260.6 497.0L1250.2 455.6M1266.3 486.2L1268.6 475.2M1266.3 486.2L1250.2 455.6M1266.3 486.2L1252.4 445.2M1252.4 445.2L1251.4 434.7M1252.4 445.2L1233.0 416.9M1252.4 445.2L1232.0 407.1M1251.4 434.7L1247.1 424.4M1251.4 434.7L1232.0 407.1M1251.4 434.7L1228.1 397.5M1247.1 424.4L1228.1 397.5M664.8 430.9L662.6 441.4M664.8 430.9L684.1 403.6M664.8 430.9L682.0 413.4M662.6 441.4L663.6 451.8M662.6 441.4L682.0 413.4M662.6 441.4L683.0 423.1M663.6 451.8L667.9 462.2M663.6 451.8L683.0 423.1M663.6 451.8L686.9 432.8M667.9 462.2L675.3 472.3M667.9 462.2L686.9 432.8M667.9 462.2L693.9 442.3M675.3 472.3L685.8 482.2M675.3 472.3L693.9 442.3M675.3 472.3L703.7 451.5M685.8 482.2L699.3 491.6M685.8 482.2L703.7 451.5M685.8 482.2L716.3 460.3M699.3 491.6L715.6 500.4M699.3 491.6L716.3 460.3M699.3 491.6L731.5 468.6M715.6 500.4L734.6 508.7M715.6 500.4L731.5 468.6M715.6 500.4L749.3 476.3M734.6 508.7L756.0 516.2M734.6 508.7L749.3 476.3M734.6 508.7L769.3 483.3M756.0 516.2L779.6 523.0M756.0 516.2L769.3 483.3M756.0 516.2L791.3 489.6M779.6 523.0L805.2 528.8M779.6 523.0L791.3 489.6M779.6 523.0L815.2 495.1M805.2 528.8L832.4 533.8M805.2 528.8L815.2 495.1M805.2 528.8L840.7 499.7M832.4 533.8L861.0 537.7M832.4 533.8L840.7 499.7M832.4 533.8L867.4 503.3M861.0 537.7L890.7 540.6M861.0 537.7L867.4 503.3M861.0 537.7L895.1 506.1M890.7 540.6L921.1 542.4M890.7 540.6L895.1 506.1M890.7 540.6L923.5 507.8M921.1 542.4L951.9 543.2M921.1 542.4L923.5 507.8M921.1 542.4L952.3 508.5M951.9 543.2L982.7 542.8M951.9 543.2L952.3 508.5M951.9 543.2L981.1 508.1M982.7 542.8L1013.3 541.4M982.7 542.8L981.1 508.1M982.7 542.8L1009.7 506.8M1013.3 541.4L1043.3 538.9M1013.3 541.4L1009.7 506.8M1013.3 541.4L1037.6 504.4M1043.3 538.9L1072.3 535.3M1043.3 538.9L1037.6 504.4M1043.3 538.9L1064.8 501.1M1072.3 535.3L1100.1 530.7M1072.3 535.3L1064.8 501.1M1072.3 535.3L1090.7 496.8M1100.1 530.7L1126.3 525.2M1100.1 530.7L1090.7 496.8M1100.1 530.7L1115.2 491.7M1126.3 525.2L1150.7 518.8M1126.3 525.2L1115.2 491.7M1126.3 525.2L1138.0 485.7M1150.7 518.8L1172.9 511.5M1150.7 518.8L1138.0 485.7M1150.7 518.8L1158.7 478.9M1172.9 511.5L1192.8 503.5M1172.9 511.5L1158.7 478.9M1172.9 511.5L1177.3 471.4M1192.8 503.5L1210.1 494.9M1192.8 503.5L1177.3 471.4M1192.8 503.5L1193.5 463.3M1210.1 494.9L1224.6 485.6M1210.1 494.9L1193.5 463.3M1210.1 494.9L1207.1 454.7M1224.6 485.6L1236.2 475.9M1224.6 485.6L1207.1 454.7M1224.6 485.6L1217.9 445.7M1236.2 475.9L1244.8 465.9M1236.2 475.9L1217.9 445.7M1236.2 475.9L1225.9 436.3M1244.8 465.9L1250.2 455.6M1244.8 465.9L1225.9 436.3M1244.8 465.9L1230.9 426.7M1250.2 455.6L1252.4 445.2M1250.2 455.6L1230.9 426.7M1250.2 455.6L1233.0 416.9M1233.0 416.9L1232.0 407.1M1233.0 416.9L1210.6 390.7M1233.0 416.9L1209.7 381.7M1232.0 407.1L1228.1 397.5M1232.0 407.1L1209.7 381.7M1232.0 407.1L1206.0 372.8M1228.1 397.5L1206.0 372.8M1228.1 397.5L1199.7 364.1M689.1 394.0L684.1 403.6M689.1 394.0L711.0 369.6M689.1 394.0L706.3 378.5M684.1 403.6L682.0 413.4M684.1 403.6L706.3 378.5M684.1 403.6L704.4 387.4M682.0 413.4L683.0 423.1M682.0 413.4L704.4 387.4M682.0 413.4L705.3 396.4M683.0 423.1L686.9 432.8M683.0 423.1L705.3 396.4M683.0 423.1L709.0 405.3M686.9 432.8L693.9 442.3M686.9 432.8L709.0 405.3M686.9 432.8L715.3 414.0M693.9 442.3L703.7 451.5M693.9 442.3L715.3 414.0M693.9 442.3L724.4 422.4M703.7 451.5L716.3 460.3M703.7 451.5L724.4 422.4M703.7 451.5L735.9 430.5M716.3 460.3L731.5 468.6M716.3 460.3L735.9 430.5M716.3 460.3L749.9 438.1M731.5 468.6L749.3 476.3M731.5 468.6L749.9 438.1M731.5 468.6L766.2 445.2M749.3 476.3L769.3 483.3M749.3 476.3L766.2 445.2M749.3 476.3L784.6 451.7M769.3 483.3L791.3 489.6M769.3 483.3L784.6 451.7M769.3 483.3L804.9 457.5M791.3 489.6L815.2 495.1M791.3 489.6L804.9 457.5M791.3 489.6L826.8 462.5M815.2 495.1L840.7 499.7M815.2 495.1L826.8 462.5M815.2 495.1L850.2 466.7M840.7 499.7L867.4 503.3M840.7 499.7L850.2 466.7M840.7 499.7L874.7 470.1M867.4 503.3L895.1 506.1M867.4 503.3L874.7 470.1M867.4 503.3L900.2 472.6M895.1 506.1L923.5 507.8M895.1 506.1L900.2 472.6M895.1 506.1L926.3 474.2M923.5 507.8L952.3 508.5M923.5 507.8L926.3 474.2M923.5 507.8L952.7 474.8M952.3 508.5L981.1 508.1M952.3 508.5L952.7 474.8M952.3 508.5L979.2 474.5M981.1 508.1L1009.7 506.8M981.1 508.1L979.2 474.5M981.1 508.1L1005.4 473.3M1009.7 506.8L1037.6 504.4M1009.7 506.8L1005.4 473.3M1009.7 506.8L1031.1 471.1M1037.6 504.4L1064.8 501.1M1037.6 504.4L1031.1 471.1M1037.6 504.4L1056.0 468.0M1064.8 501.1L1090.7 496.8M1064.8 501.1L1056.0 468.0M1064.8 501.1L1079.9 464.1M1090.7 496.8L1115.2 491.7M1090.7 496.8L1079.9 464.1M1090.7 496.8L1102.4 459.4M1115.2 491.7L1138.0 485.7M1115.2 491.7L1102.4 459.4M1115.2 491.7L1123.3 453.9M1138.0 485.7L1158.7 478.9M1138.0 485.7L1123.3 453.9M1138.0 485.7L1142.3 447.6M1158.7 478.9L1177.3 471.4M1158.7 478.9L1142.3 447.6M1158.7 478.9L1159.4 440.8M1177.3 471.4L1193.5 463.3M1177.3 471.4L1159.4 440.8M1177.3 471.4L1174.3 433.3M1193.5 463.3L1207.1 454.7M1193.5 463.3L1174.3 433.3M1193.5 463.3L1186.7 425.4M1207.1 454.7L1217.9 445.7M1207.1 454.7L1186.7 425.4M1207.1 454.7L1196.7 417.1M1217.9 445.7L1225.9 436.3M1217.9 445.7L1196.7 417.1M1217.9 445.7L1204.0 408.5M1225.9 436.3L1230.9 426.7M1225.9 436.3L1204.0 408.5M1225.9 436.3L1208.7 399.7M1230.9 426.7L1233.0 416.9M1230.9 426.7L1208.7 399.7M1230.9 426.7L1210.6 390.7M1210.6 390.7L1209.7 381.7M1210.6 390.7L1185.4 366.8M1210.6 390.7L1184.6 358.7M1209.7 381.7L1206.0 372.8M1209.7 381.7L1184.6 358.7M1209.7 381.7L1181.3 350.7M1206.0 372.8L1199.7 364.1M1206.0 372.8L1181.3 350.7M1206.0 372.8L1175.6 342.9M1199.7 364.1L1175.6 342.9M1199.7 364.1L1167.4 335.3M711.0 369.6L706.3 378.5M711.0 369.6L735.5 347.9M711.0 369.6L731.3 355.8M706.3 378.5L704.4 387.4M706.3 378.5L731.3 355.8M706.3 378.5L729.6 363.9M704.4 387.4L705.3 396.4M704.4 387.4L729.6 363.9M704.4 387.4L730.4 372.0M705.3 396.4L709.0 405.3M705.3 396.4L730.4 372.0M705.3 396.4L733.7 380.0M709.0 405.3L715.3 414.0M709.0 405.3L733.7 380.0M709.0 405.3L739.4 387.8M715.3 414.0L724.4 422.4M715.3 414.0L739.4 387.8M715.3 414.0L747.6 395.4M724.4 422.4L735.9 430.5M724.4 422.4L747.6 395.4M724.4 422.4L758.0 402.7M735.9 430.5L749.9 438.1M735.9 430.5L758.0 402.7M735.9 430.5L770.6 409.5M749.9 438.1L766.2 445.2M749.9 438.1L770.6 409.5M749.9 438.1L785.3 415.9M766.2 445.2L784.6 451.7M766.2 445.2L785.3 415.9M766.2 445.2L801.8 421.7M784.6 451.7L804.9 457.5M784.6 451.7L801.8 421.7M784.6 451.7L820.1 426.9M804.9 457.5L826.8 462.5M804.9 457.5L820.1 426.9M804.9 457.5L839.8 431.5M826.8 462.5L850.2 466.7M826.8 462.5L839.8 431.5M826.8 462.5L860.9 435.3M850.2 466.7L874.7 470.1M850.2 466.7L860.9 435.3M850.2 466.7L883.0 438.3M874.7 470.1L900.2 472.6M874.7 470.1L883.0 438.3M874.7 470.1L905.9 440.5M900.2 472.6L926.3 474.2M900.2 472.6L905.9 440.5M900.2 472.6L929.4 442.0M926.3 474.2L952.7 474.8M926.3 474.2L929.4 442.0M926.3 474.2L953.2 442.5M952.7 474.8L979.2 474.5M952.7 474.8L953.2 442.5M952.7 474.8L977.0 442.3M979.2 474.5L1005.4 473.3M979.2 474.5L977.0 442.3M979.2 474.5L1000.6 441.2M1005.4 473.3L1031.1 471.1M1005.4 473.3L1000.6 441.2M1005.4 473.3L1023.8 439.2M1031.1 471.1L1056.0 468.0M1031.1 471.1L1023.8 439.2M1031.1 471.1L1046.2 436.5M1056.0 468.0L1079.9 464.1M1056.0 468.0L1046.2 436.5M1056.0 468.0L1067.7 432.9M1079.9 464.1L1102.4 459.4M1079.9 464.1L1067.7 432.9M1079.9 464.1L1087.9 428.7M1102.4 459.4L1123.3 453.9M1102.4 459.4L1087.9 428.7M1102.4 459.4L1106.7 423.7M1123.3 453.9L1142.3 447.6M1123.3 453.9L1106.7 423.7M1123.3 453.9L1123.9 418.1M1142.3 447.6L1159.4 440.8M1142.3 447.6L1123.9 418.1M1142.3 447.6L1139.3 411.9M1159.4 440.8L1174.3 433.3M1159.4 440.8L1139.3 411.9M1159.4 440.8L1152.7 405.2M1174.3 433.3L1186.7 425.4M1174.3 433.3L1152.7 405.2M1174.3 433.3L1163.9 398.1M1186.7 425.4L1196.7 417.1M1186.7 425.4L1163.9 398.1M1186.7 425.4L1172.9 390.6M1196.7 417.1L1204.0 408.5M1196.7 417.1L1172.9 390.6M1196.7 417.1L1179.5 382.8M1204.0 408.5L1208.7 399.7M1204.0 408.5L1179.5 382.8M1204.0 408.5L1183.7 374.9M1208.7 399.7L1210.6 390.7M1208.7 399.7L1183.7 374.9M1208.7 399.7L1185.4 366.8M1185.4 366.8L1184.6 358.7M1185.4 366.8L1157.7 345.5M1185.4 366.8L1157.0 338.4M1184.6 358.7L1181.3 350.7M1184.6 358.7L1157.0 338.4M1184.6 358.7L1154.1 331.4M1181.3 350.7L1175.6 342.9M1181.3 350.7L1154.1 331.4M1181.3 350.7L1149.0 324.5M1175.6 342.9L1167.4 335.3M1175.6 342.9L1149.0 324.5M1175.6 342.9L1141.9 317.8M1167.4 335.3L1141.9 317.8M1167.4 335.3L1132.8 311.5M742.1 340.1L735.5 347.9M742.1 340.1L768.3 322.1M742.1 340.1L762.5 328.9M735.5 347.9L731.3 355.8M735.5 347.9L762.5 328.9M735.5 347.9L758.8 335.9M731.3 355.8L729.6 363.9M731.3 355.8L758.8 335.9M731.3 355.8L757.3 342.9M729.6 363.9L730.4 372.0M729.6 363.9L757.3 342.9M729.6 363.9L758.0 350.0M730.4 372.0L733.7 380.0M730.4 372.0L758.0 350.0M730.4 372.0L760.9 357.1M733.7 380.0L739.4 387.8M733.7 380.0L760.9 357.1M733.7 380.0L766.0 364.0M739.4 387.8L747.6 395.4M739.4 387.8L766.0 364.0M739.4 387.8L773.1 370.6M747.6 395.4L758.0 402.7M747.6 395.4L773.1 370.6M747.6 395.4L782.2 377.0M758.0 402.7L770.6 409.5M758.0 402.7L782.2 377.0M758.0 402.7L793.3 383.0M770.6 409.5L785.3 415.9M770.6 409.5L793.3 383.0M770.6 409.5L806.2 388.6M785.3 415.9L801.8 421.7M785.3 415.9L806.2 388.6M785.3 415.9L820.7 393.8M801.8 421.7L820.1 426.9M801.8 421.7L820.7 393.8M801.8 421.7L836.8 398.3M820.1 426.9L839.8 431.5M820.1 426.9L836.8 398.3M820.1 426.9L854.1 402.3M839.8 431.5L860.9 435.3M839.8 431.5L854.1 402.3M839.8 431.5L872.6 405.7M860.9 435.3L883.0 438.3M860.9 435.3L872.6 405.7M860.9 435.3L892.0 408.3M883.0 438.3L905.9 440.5M883.0 438.3L892.0 408.3M883.0 438.3L912.2 410.3M905.9 440.5L929.4 442.0M905.9 440.5L912.2 410.3M905.9 440.5L932.8 411.5M929.4 442.0L953.2 442.5M929.4 442.0L932.8 411.5M929.4 442.0L953.7 412.0M953.2 442.5L977.0 442.3M953.2 442.5L953.7 412.0M953.2 442.5L974.6 411.8M977.0 442.3L1000.6 441.2M977.0 442.3L974.6 411.8M977.0 442.3L995.4 410.8M1000.6 441.2L1023.8 439.2M1000.6 441.2L995.4 410.8M1000.6 441.2L1015.7 409.1M1023.8 439.2L1046.2 436.5M1023.8 439.2L1015.7 409.1M1023.8 439.2L1035.4 406.7M1046.2 436.5L1067.7 432.9M1046.2 436.5L1035.4 406.7M1046.2 436.5L1054.3 403.6M1067.7 432.9L1087.9 428.7M1067.7 432.9L1054.3 403.6M1067.7 432.9L1072.1 399.9M1087.9 428.7L1106.7 423.7M1087.9 428.7L1072.1 399.9M1087.9 428.7L1088.6 395.5M1106.7 423.7L1123.9 418.1M1106.7 423.7L1088.6 395.5M1106.7 423.7L1103.7 390.6M1123.9 418.1L1139.3 411.9M1123.9 418.1L1103.7 390.6M1123.9 418.1L1117.2 385.1M1139.3 411.9L1152.7 405.2M1139.3 411.9L1117.2 385.1M1139.3 411.9L1128.9 379.3M1152.7 405.2L1163.9 398.1M1152.7 405.2L1128.9 379.3M1152.7 405.2L1138.8 373.0M1163.9 398.1L1172.9 390.6M1163.9 398.1L1138.8 373.0M1163.9 398.1L1146.7 366.4M1172.9 390.6L1179.5 382.8M1172.9 390.6L1146.7 366.4M1172.9 390.6L1152.5 359.6M1179.5 382.8L1183.7 374.9M1179.5 382.8L1152.5 359.6M1179.5 382.8L1156.2 352.6M1183.7 374.9L1185.4 366.8M1183.7 374.9L1156.2 352.6M1183.7 374.9L1157.7 345.5M1157.7 345.5L1157.0 338.4M1157.7 345.5L1127.8 327.1M1157.7 345.5L1127.2 321.0M1157.0 338.4L1154.1 331.4M1157.0 338.4L1127.2 321.0M1157.0 338.4L1124.7 315.1M1154.1 331.4L1149.0 324.5M1154.1 331.4L1124.7 315.1M1154.1 331.4L1120.4 309.2M1149.0 324.5L1141.9 317.8M1149.0 324.5L1120.4 309.2M1149.0 324.5L1114.4 303.5M1141.9 317.8L1132.8 311.5M1141.9 317.8L1114.4 303.5M1141.9 317.8L1106.6 298.1M1132.8 311.5L1106.6 298.1M1132.8 311.5L1097.2 293.0M776.2 315.5L768.3 322.1M776.2 315.5L803.3 301.5M776.2 315.5L796.6 307.1M768.3 322.1L762.5 328.9M768.3 322.1L796.6 307.1M768.3 322.1L791.6 312.9M762.5 328.9L758.8 335.9M762.5 328.9L791.6 312.9M762.5 328.9L788.5 318.8M758.8 335.9L757.3 342.9M758.8 335.9L788.5 318.8M758.8 335.9L787.2 324.9M757.3 342.9L758.0 350.0M757.3 342.9L787.2 324.9M757.3 342.9L787.8 330.9M758.0 350.0L760.9 357.1M758.0 350.0L787.8 330.9M758.0 350.0L790.3 336.9M760.9 357.1L766.0 364.0M760.9 357.1L790.3 336.9M760.9 357.1L794.6 342.7M766.0 364.0L773.1 370.6M766.0 364.0L794.6 342.7M766.0 364.0L800.6 348.4M773.1 370.6L782.2 377.0M773.1 370.6L800.6 348.4M773.1 370.6L808.4 353.9M782.2 377.0L793.3 383.0M782.2 377.0L808.4 353.9M782.2 377.0L817.8 359.0M793.3 383.0L806.2 388.6M793.3 383.0L817.8 359.0M793.3 383.0L828.8 363.7M806.2 388.6L820.7 393.8M806.2 388.6L828.8 363.7M806.2 388.6L841.2 368.1M820.7 393.8L836.8 398.3M820.7 393.8L841.2 368.1M820.7 393.8L854.8 372.0M836.8 398.3L854.1 402.3M836.8 398.3L854.8 372.0M836.8 398.3L869.6 375.4M854.1 402.3L872.6 405.7M854.1 402.3L869.6 375.4M854.1 402.3L885.3 378.2M872.6 405.7L892.0 408.3M872.6 405.7L885.3 378.2M872.6 405.7L901.8 380.5M892.0 408.3L912.2 410.3M892.0 408.3L901.8 380.5M892.0 408.3L918.9 382.2M912.2 410.3L932.8 411.5M912.2 410.3L918.9 382.2M912.2 410.3L936.5 383.2M932.8 411.5L953.7 412.0M932.8 411.5L936.5 383.2M932.8 411.5L954.3 383.6M953.7 412.0L974.6 411.8M953.7 412.0L954.3 383.6M953.7 412.0L972.1 383.4M974.6 411.8L995.4 410.8M974.6 411.8L972.1 383.4M974.6 411.8L989.7 382.6M995.4 410.8L1015.7 409.1M995.4 410.8L989.7 382.6M995.4 410.8L1007.0 381.2M1015.7 409.1L1035.4 406.7M1015.7 409.1L1007.0 381.2M1015.7 409.1L1023.8 379.1M1035.4 406.7L1054.3 403.6M1035.4 406.7L1023.8 379.1M1035.4 406.7L1039.8 376.5M1054.3 403.6L1072.1 399.9M1054.3 403.6L1039.8 376.5M1054.3 403.6L1055.0 373.3M1072.1 399.9L1088.6 395.5M1072.1 399.9L1055.0 373.3M1072.1 399.9L1069.0 369.6M1088.6 395.5L1103.7 390.6M1088.6 395.5L1069.0 369.6M1088.6 395.5L1081.9 365.4M1103.7 390.6L1117.2 385.1M1103.7 390.6L1081.9 365.4M1103.7 390.6L1093.3 360.8M1117.2 385.1L1128.9 379.3M1117.2 385.1L1093.3 360.8M1117.2 385.1L1103.3 355.8M1128.9 379.3L1138.8 373.0M1128.9 379.3L1103.3 355.8M1128.9 379.3L1111.7 350.4M1138.8 373.0L1146.7 366.4M1138.8 373.0L1111.7 350.4M1138.8 373.0L1118.4 344.8M1146.7 366.4L1152.5 359.6M1146.7 366.4L1118.4 344.8M1146.7 366.4L1123.4 339.0M1152.5 359.6L1156.2 352.6M1152.5 359.6L1123.4 339.0M1152.5 359.6L1126.5 333.1M1156.2 352.6L1157.7 345.5M1156.2 352.6L1126.5 333.1M1156.2 352.6L1127.8 327.1M1127.8 327.1L1127.2 321.0M1127.8 327.1L1096.0 311.6M1127.8 327.1L1095.5 306.7M1127.2 321.0L1124.7 315.1M1127.2 321.0L1095.5 306.7M1127.2 321.0L1093.5 301.9M1124.7 315.1L1120.4 309.2M1124.7 315.1L1093.5 301.9M1124.7 315.1L1090.0 297.1M1120.4 309.2L1114.4 303.5M1120.4 309.2L1090.0 297.1M1120.4 309.2L1085.1 292.5M1114.4 303.5L1106.6 298.1M1114.4 303.5L1085.1 292.5M1114.4 303.5L1078.8 288.1M1106.6 298.1L1097.2 293.0M1106.6 298.1L1078.8 288.1M1106.6 298.1L1071.1 283.9M1097.2 293.0L1071.1 283.9M1097.2 293.0L1062.2 280.0M821.7 291.2L811.7 296.2M821.7 291.2L847.0 282.4M821.7 291.2L838.9 286.5M811.7 296.2L803.3 301.5M811.7 296.2L838.9 286.5M811.7 296.2L832.0 290.8M803.3 301.5L796.6 307.1M803.3 301.5L832.0 290.8M803.3 301.5L826.6 295.4M796.6 307.1L791.6 312.9M796.6 307.1L826.6 295.4M796.6 307.1L822.6 300.1M791.6 312.9L788.5 318.8M791.6 312.9L822.6 300.1M791.6 312.9L820.0 304.9M788.5 318.8L787.2 324.9M788.5 318.8L820.0 304.9M788.5 318.8L819.0 309.8M787.2 324.9L787.8 330.9M787.2 324.9L819.0 309.8M787.2 324.9L819.5 314.8M787.8 330.9L790.3 336.9M787.8 330.9L819.5 314.8M787.8 330.9L821.5 319.6M790.3 336.9L794.6 342.7M790.3 336.9L821.5 319.6M790.3 336.9L825.0 324.4M794.6 342.7L800.6 348.4M794.6 342.7L825.0 324.4M794.6 342.7L829.9 329.0M800.6 348.4L808.4 353.9M800.6 348.4L829.9 329.0M800.6 348.4L836.2 333.4M808.4 353.9L817.8 359.0M808.4 353.9L836.2 333.4M808.4 353.9L843.9 337.6M817.8 359.0L828.8 363.7M817.8 359.0L843.9 337.6M817.8 359.0L852.8 341.5M828.8 363.7L841.2 368.1M828.8 363.7L852.8 341.5M828.8 363.7L862.9 345.0M841.2 368.1L854.8 372.0M841.2 368.1L862.9 345.0M841.2 368.1L874.0 348.2M854.8 372.0L869.6 375.4M854.8 372.0L874.0 348.2M854.8 372.0L886.0 350.9M869.6 375.4L885.3 378.2M869.6 375.4L886.0 350.9M869.6 375.4L898.8 353.2M885.3 378.2L901.8 380.5M885.3 378.2L898.8 353.2M885.3 378.2L912.2 355.1M901.8 380.5L918.9 382.2M901.8 380.5L912.2 355.1M901.8 380.5L926.1 356.4M918.9 382.2L936.5 383.2M918.9 382.2L926.1 356.4M918.9 382.2L940.4 357.3M936.5 383.2L954.3 383.6M936.5 383.2L940.4 357.3M936.5 383.2L954.9 357.7M954.3 383.6L972.1 383.4M954.3 383.6L954.9 357.7M954.3 383.6L969.4 357.5M972.1 383.4L989.7 382.6M972.1 383.4L969.4 357.5M972.1 383.4L983.7 356.8M989.7 382.6L1007.0 381.2M989.7 382.6L983.7 356.8M989.7 382.6L997.8 355.6M1007.0 381.2L1023.8 379.1M1007.0 381.2L997.8 355.6M1007.0 381.2L1011.4 354.0M1023.8 379.1L1039.8 376.5M1023.8 379.1L1011.4 354.0M1023.8 379.1L1024.5 351.8M1039.8 376.5L1055.0 373.3M1039.8 376.5L1024.5 351.8M1039.8 376.5L1036.8 349.2M1055.0 373.3L1069.0 369.6M1055.0 373.3L1036.8 349.2M1055.0 373.3L1048.2 346.2M1069.0 369.6L1081.9 365.4M1069.0 369.6L1048.2 346.2M1069.0 369.6L1058.7 342.8M1081.9 365.4L1093.3 360.8M1081.9 365.4L1058.7 342.8M1081.9 365.4L1068.0 339.0M1093.3 360.8L1103.3 355.8M1093.3 360.8L1068.0 339.0M1093.3 360.8L1076.1 335.0M1103.3 355.8L1111.7 350.4M1103.3 355.8L1076.1 335.0M1103.3 355.8L1083.0 330.6M1111.7 350.4L1118.4 344.8M1111.7 350.4L1083.0 330.6M1111.7 350.4L1088.4 326.1M1118.4 344.8L1123.4 339.0M1118.4 344.8L1088.4 326.1M1118.4 344.8L1092.4 321.4M1123.4 339.0L1126.5 333.1M1123.4 339.0L1092.4 321.4M1123.4 339.0L1095.0 316.5M1126.5 333.1L1127.8 327.1M1126.5 333.1L1095.0 316.5M1126.5 333.1L1096.0 311.6M1096.0 311.6L1095.5 306.7M1096.0 311.6L1062.7 299.4M1096.0 311.6L1062.4 295.7M1095.5 306.7L1093.5 301.9M1095.5 306.7L1062.4 295.7M1095.5 306.7L1060.8 292.0M1093.5 301.9L1090.0 297.1M1093.5 301.9L1060.8 292.0M1093.5 301.9L1058.2 288.4M1090.0 297.1L1085.1 292.5M1090.0 297.1L1058.2 288.4M1090.0 297.1L1054.4 284.8M1085.1 292.5L1078.8 288.1M1085.1 292.5L1054.4 284.8M1085.1 292.5L1049.6 281.5M1078.8 288.1L1071.1 283.9M1078.8 288.1L1049.6 281.5M1078.8 288.1L1043.8 278.3M1071.1 283.9L1062.2 280.0M1071.1 283.9L1043.8 278.3M1071.1 283.9L1037.0 275.4M1062.2 280.0L1052.1 276.5M1062.2 280.0L1037.0 275.4M1062.2 280.0L1029.4 272.7M1052.1 276.5L1041.0 273.3M1052.1 276.5L1029.4 272.7M1052.1 276.5L1021.0 270.3M1041.0 273.3L1021.0 270.3M1041.0 273.3L1011.9 268.2M866.8 275.3L856.3 278.7M866.8 275.3L888.6 271.8M866.8 275.3L880.6 274.4M856.3 278.7L847.0 282.4M856.3 278.7L880.6 274.4M856.3 278.7L873.5 277.2M847.0 282.4L838.9 286.5M847.0 282.4L873.5 277.2M847.0 282.4L867.4 280.3M838.9 286.5L832.0 290.8M838.9 286.5L867.4 280.3M838.9 286.5L862.2 283.6M832.0 290.8L826.6 295.4M832.0 290.8L862.2 283.6M832.0 290.8L858.0 287.1M826.6 295.4L822.6 300.1M826.6 295.4L858.0 287.1M826.6 295.4L855.0 290.6M822.6 300.1L820.0 304.9M822.6 300.1L855.0 290.6M822.6 300.1L853.1 294.3M820.0 304.9L819.0 309.8M820.0 304.9L853.1 294.3M820.0 304.9L852.3 298.0M819.0 309.8L819.5 314.8M819.0 309.8L852.3 298.0M819.0 309.8L852.6 301.8M819.5 314.8L821.5 319.6M819.5 314.8L852.6 301.8M819.5 314.8L854.2 305.5M821.5 319.6L825.0 324.4M821.5 319.6L854.2 305.5M821.5 319.6L856.8 309.1M825.0 324.4L829.9 329.0M825.0 324.4L856.8 309.1M825.0 324.4L860.6 312.6M829.9 329.0L836.2 333.4M829.9 329.0L860.6 312.6M829.9 329.0L865.4 316.0M836.2 333.4L843.9 337.6M836.2 333.4L865.4 316.0M836.2 333.4L871.2 319.1M843.9 337.6L852.8 341.5M843.9 337.6L871.2 319.1M843.9 337.6L878.0 322.1M852.8 341.5L862.9 345.0M852.8 341.5L878.0 322.1M852.8 341.5L885.6 324.8M862.9 345.0L874.0 348.2M862.9 345.0L885.6 324.8M862.9 345.0L894.0 327.2M874.0 348.2L886.0 350.9M874.0 348.2L894.0 327.2M874.0 348.2L903.1 329.3M886.0 350.9L898.8 353.2M886.0 350.9L903.1 329.3M886.0 350.9L912.9 331.0M898.8 353.2L912.2 355.1M898.8 353.2L912.9 331.0M898.8 353.2L923.1 332.4M912.2 355.1L926.1 356.4M912.2 355.1L923.1 332.4M912.2 355.1L933.7 333.4M926.1 356.4L940.4 357.3M926.1 356.4L933.7 333.4M926.1 356.4L944.5 334.1M940.4 357.3L954.9 357.7M940.4 357.3L944.5 334.1M940.4 357.3L955.5 334.4M954.9 357.7L969.4 357.5M954.9 357.7L955.5 334.4M954.9 357.7L966.5 334.2M969.4 357.5L983.7 356.8M969.4 357.5L966.5 334.2M969.4 357.5L977.4 333.7M983.7 356.8L997.8 355.6M983.7 356.8L977.4 333.7M983.7 356.8L988.1 332.8M997.8 355.6L1011.4 354.0M997.8 355.6L988.1 332.8M997.8 355.6L998.5 331.6M1011.4 354.0L1024.5 351.8M1011.4 354.0L998.5 331.6M1011.4 354.0L1008.4 329.9M1024.5 351.8L1036.8 349.2M1024.5 351.8L1008.4 329.9M1024.5 351.8L1017.7 328.0M1036.8 349.2L1048.2 346.2M1036.8 349.2L1017.7 328.0M1036.8 349.2L1026.4 325.7M1048.2 346.2L1058.7 342.8M1048.2 346.2L1026.4 325.7M1048.2 346.2L1034.4 323.1M1058.7 342.8L1068.0 339.0M1058.7 342.8L1034.4 323.1M1058.7 342.8L1041.5 320.2M1068.0 339.0L1076.1 335.0M1068.0 339.0L1041.5 320.2M1068.0 339.0L1047.6 317.1M1076.1 335.0L1083.0 330.6M1076.1 335.0L1047.6 317.1M1076.1 335.0L1052.8 313.8M1083.0 330.6L1088.4 326.1M1083.0 330.6L1052.8 313.8M1083.0 330.6L1057.0 310.4M1088.4 326.1L1092.4 321.4M1088.4 326.1L1057.0 310.4M1088.4 326.1L1060.0 306.8M1092.4 321.4L1095.0 316.5M1092.4 321.4L1060.0 306.8M1092.4 321.4L1061.9 303.1M1095.0 316.5L1096.0 311.6M1095.0 316.5L1061.9 303.1M1095.0 316.5L1062.7 299.4M1062.7 299.4L1062.4 295.7M1062.7 299.4L1028.3 290.5M1062.7 299.4L1028.1 288.0M1062.4 295.7L1060.8 292.0M1062.4 295.7L1028.1 288.0M1062.4 295.7L1027.0 285.5M1060.8 292.0L1058.2 288.4M1060.8 292.0L1027.0 285.5M1060.8 292.0L1025.3 283.1M1058.2 288.4L1054.4 284.8M1058.2 288.4L1025.3 283.1M1058.2 288.4L1022.7 280.7M1054.4 284.8L1049.6 281.5M1054.4 284.8L1022.7 280.7M1054.4 284.8L1019.5 278.4M1049.6 281.5L1043.8 278.3M1049.6 281.5L1019.5 278.4M1049.6 281.5L1015.6 276.3M1043.8 278.3L1037.0 275.4M1043.8 278.3L1015.6 276.3M1043.8 278.3L1011.0 274.3M1037.0 275.4L1029.4 272.7M1037.0 275.4L1011.0 274.3M1037.0 275.4L1005.9 272.5M1029.4 272.7L1021.0 270.3M1029.4 272.7L1005.9 272.5M1029.4 272.7L1000.2 270.9M1021.0 270.3L1011.9 268.2M1021.0 270.3L1000.2 270.9M1021.0 270.3L994.1 269.5M1011.9 268.2L1002.1 266.4M1011.9 268.2L994.1 269.5M1011.9 268.2L987.5 268.3M1002.1 266.4L991.9 265.0M1002.1 266.4L987.5 268.3M1002.1 266.4L980.7 267.4M991.9 265.0L981.3 264.0M991.9 265.0L980.7 267.4M991.9 265.0L973.5 266.7M981.3 264.0L970.5 263.3M981.3 264.0L973.5 266.7M981.3 264.0L966.2 266.2M970.5 263.3L959.5 263.1M970.5 263.3L966.2 266.2M970.5 263.3L958.8 266.1M959.5 263.1L948.5 263.2M959.5 263.1L958.8 266.1M959.5 263.1L951.4 266.1M948.5 263.2L937.6 263.7M948.5 263.2L951.4 266.1M948.5 263.2L944.1 266.5M937.6 263.7L926.9 264.6M937.6 263.7L944.1 266.5M937.6 263.7L936.9 267.1M926.9 264.6L916.5 265.9M926.9 264.6L936.9 267.1M926.9 264.6L929.9 267.9M916.5 265.9L906.6 267.5M916.5 265.9L929.9 267.9M916.5 265.9L923.3 269.0M906.6 267.5L897.3 269.5M906.6 267.5L923.3 269.0M906.6 267.5L917.0 270.4M897.3 269.5L888.6 271.8M897.3 269.5L917.0 270.4M897.3 269.5L911.1 271.9M888.6 271.8L880.6 274.4M888.6 271.8L911.1 271.9M888.6 271.8L905.8 273.7M880.6 274.4L873.5 277.2M880.6 274.4L905.8 273.7M880.6 274.4L901.0 275.6M873.5 277.2L867.4 280.3M873.5 277.2L901.0 275.6M873.5 277.2L896.9 277.7M867.4 280.3L862.2 283.6M867.4 280.3L896.9 277.7M867.4 280.3L893.4 279.9M862.2 283.6L858.0 287.1M862.2 283.6L893.4 279.9M862.2 283.6L890.6 282.2M858.0 287.1L855.0 290.6M858.0 287.1L890.6 282.2M858.0 287.1L888.5 284.6M855.0 290.6L853.1 294.3M855.0 290.6L888.5 284.6M855.0 290.6L887.2 287.1M853.1 294.3L852.3 298.0M853.1 294.3L887.2 287.1M853.1 294.3L886.7 289.6M852.3 298.0L852.6 301.8M852.3 298.0L886.7 289.6M852.3 298.0L886.9 292.1M852.6 301.8L854.2 305.5M852.6 301.8L886.9 292.1M852.6 301.8L888.0 294.6M854.2 305.5L856.8 309.1M854.2 305.5L888.0 294.6M854.2 305.5L889.7 297.0M856.8 309.1L860.6 312.6M856.8 309.1L889.7 297.0M856.8 309.1L892.3 299.4M860.6 312.6L865.4 316.0M860.6 312.6L892.3 299.4M860.6 312.6L895.5 301.6M865.4 316.0L871.2 319.1M865.4 316.0L895.5 301.6M865.4 316.0L899.4 303.8M871.2 319.1L878.0 322.1M871.2 319.1L899.4 303.8M871.2 319.1L904.0 305.7M878.0 322.1L885.6 324.8M878.0 322.1L904.0 305.7M878.0 322.1L909.1 307.6M885.6 324.8L894.0 327.2M885.6 324.8L909.1 307.6M885.6 324.8L914.8 309.2M894.0 327.2L903.1 329.3M894.0 327.2L914.8 309.2M894.0 327.2L920.9 310.6M903.1 329.3L912.9 331.0M903.1 329.3L920.9 310.6M903.1 329.3L927.5 311.8M912.9 331.0L923.1 332.4M912.9 331.0L927.5 311.8M912.9 331.0L934.3 312.7M923.1 332.4L933.7 333.4M923.1 332.4L934.3 312.7M923.1 332.4L941.5 313.4M933.7 333.4L944.5 334.1M933.7 333.4L941.5 313.4M933.7 333.4L948.8 313.8M944.5 334.1L955.5 334.4M944.5 334.1L948.8 313.8M944.5 334.1L956.2 314.0M955.5 334.4L966.5 334.2M955.5 334.4L956.2 314.0M955.5 334.4L963.6 313.9M966.5 334.2L977.4 333.7M966.5 334.2L963.6 313.9M966.5 334.2L970.9 313.6M977.4 333.7L988.1 332.8M977.4 333.7L970.9 313.6M977.4 333.7L978.1 313.0M988.1 332.8L998.5 331.6M988.1 332.8L978.1 313.0M988.1 332.8L985.1 312.1M998.5 331.6L1008.4 329.9M998.5 331.6L985.1 312.1M998.5 331.6L991.7 311.0M1008.4 329.9L1017.7 328.0M1008.4 329.9L991.7 311.0M1008.4 329.9L998.0 309.7M1017.7 328.0L1026.4 325.7M1017.7 328.0L998.0 309.7M1017.7 328.0L1003.9 308.2M1026.4 325.7L1034.4 323.1M1026.4 325.7L1003.9 308.2M1026.4 325.7L1009.2 306.4M1034.4 323.1L1041.5 320.2M1034.4 323.1L1009.2 306.4M1034.4 323.1L1014.0 304.5M1041.5 320.2L1047.6 317.1M1041.5 320.2L1014.0 304.5M1041.5 320.2L1018.1 302.4M1047.6 317.1L1052.8 313.8M1047.6 317.1L1018.1 302.4M1047.6 317.1L1021.6 300.2M1052.8 313.8L1057.0 310.4M1052.8 313.8L1021.6 300.2M1052.8 313.8L1024.4 297.9M1057.0 310.4L1060.0 306.8M1057.0 310.4L1024.4 297.9M1057.0 310.4L1026.5 295.5M1060.0 306.8L1061.9 303.1M1060.0 306.8L1026.5 295.5M1060.0 306.8L1027.8 293.0M1061.9 303.1L1062.7 299.4M1061.9 303.1L1027.8 293.0M1061.9 303.1L1028.3 290.5M1028.3 290.5L1028.1 288.0M1028.3 290.5L993.1 285.0M1028.3 290.5L993.0 283.8M1028.1 288.0L1027.0 285.5M1028.1 288.0L993.0 283.8M1028.1 288.0L992.5 282.5M1027.0 285.5L1025.3 283.1M1027.0 285.5L992.5 282.5M1027.0 285.5L991.6 281.3M1025.3 283.1L1022.7 280.7M1025.3 283.1L991.6 281.3M1025.3 283.1L990.3 280.1M1022.7 280.7L1019.5 278.4M1022.7 280.7L990.3 280.1M1022.7 280.7L988.7 279.0M1019.5 278.4L1015.6 276.3M1019.5 278.4L988.7 279.0M1019.5 278.4L986.7 277.9M1015.6 276.3L1011.0 274.3M1015.6 276.3L986.7 277.9M1015.6 276.3L984.4 276.9M1011.0 274.3L1005.9 272.5M1011.0 274.3L984.4 276.9M1011.0 274.3L981.8 276.0M1005.9 272.5L1000.2 270.9M1005.9 272.5L981.8 276.0M1005.9 272.5L979.0 275.2M1000.2 270.9L994.1 269.5M1000.2 270.9L979.0 275.2M1000.2 270.9L975.9 274.5M994.1 269.5L987.5 268.3M994.1 269.5L975.9 274.5M994.1 269.5L972.6 273.9M987.5 268.3L980.7 267.4M987.5 268.3L972.6 273.9M987.5 268.3L969.1 273.4M980.7 267.4L973.5 266.7M980.7 267.4L969.1 273.4M980.7 267.4L965.6 273.0M973.5 266.7L966.2 266.2M973.5 266.7L965.6 273.0M973.5 266.7L961.9 272.8M966.2 266.2L958.8 266.1M966.2 266.2L961.9 272.8M966.2 266.2L958.2 272.7M958.8 266.1L951.4 266.1M958.8 266.1L958.2 272.7M958.8 266.1L954.5 272.8M951.4 266.1L944.1 266.5M951.4 266.1L954.5 272.8M951.4 266.1L950.8 272.9M944.1 266.5L936.9 267.1M944.1 266.5L950.8 272.9M944.1 266.5L947.1 273.3M936.9 267.1L929.9 267.9M936.9 267.1L947.1 273.3M936.9 267.1L943.6 273.7M929.9 267.9L923.3 269.0M929.9 267.9L943.6 273.7M929.9 267.9L940.3 274.2M923.3 269.0L917.0 270.4M923.3 269.0L940.3 274.2M923.3 269.0L937.1 274.9M917.0 270.4L911.1 271.9M917.0 270.4L937.1 274.9M917.0 270.4L934.2 275.7M911.1 271.9L905.8 273.7M911.1 271.9L934.2 275.7M911.1 271.9L931.5 276.6M905.8 273.7L901.0 275.6M905.8 273.7L931.5 276.6M905.8 273.7L929.1 277.5M901.0 275.6L896.9 277.7M901.0 275.6L929.1 277.5M901.0 275.6L927.0 278.6M896.9 277.7L893.4 279.9M896.9 277.7L927.0 278.6M896.9 277.7L925.3 279.7M893.4 279.9L890.6 282.2M893.4 279.9L925.3 279.7M893.4 279.9L923.9 280.8M890.6 282.2L888.5 284.6M890.6 282.2L923.9 280.8M890.6 282.2L922.8 282.1M888.5 284.6L887.2 287.1M888.5 284.6L922.8 282.1M888.5 284.6L922.2 283.3M887.2 287.1L886.7 289.6M887.2 287.1L922.2 283.3M887.2 287.1L921.9 284.6M886.7 289.6L886.9 292.1M886.7 289.6L921.9 284.6M886.7 289.6L922.0 285.8M886.9 292.1L888.0 294.6M886.9 292.1L922.0 285.8M886.9 292.1L922.5 287.1M888.0 294.6L889.7 297.0M888.0 294.6L922.5 287.1M888.0 294.6L923.4 288.3M889.7 297.0L892.3 299.4M889.7 297.0L923.4 288.3M889.7 297.0L924.7 289.5M892.3 299.4L895.5 301.6M892.3 299.4L924.7 289.5M892.3 299.4L926.3 290.6M895.5 301.6L899.4 303.8M895.5 301.6L926.3 290.6M895.5 301.6L928.3 291.7M899.4 303.8L904.0 305.7M899.4 303.8L928.3 291.7M899.4 303.8L930.6 292.7M904.0 305.7L909.1 307.6M904.0 305.7L930.6 292.7M904.0 305.7L933.2 293.6M909.1 307.6L914.8 309.2M909.1 307.6L933.2 293.6M909.1 307.6L936.0 294.4M914.8 309.2L920.9 310.6M914.8 309.2L936.0 294.4M914.8 309.2L939.1 295.1M920.9 310.6L927.5 311.8M920.9 310.6L939.1 295.1M920.9 310.6L942.4 295.7M927.5 311.8L934.3 312.7M927.5 311.8L942.4 295.7M927.5 311.8L945.9 296.2M934.3 312.7L941.5 313.4M934.3 312.7L945.9 296.2M934.3 312.7L949.4 296.5M941.5 313.4L948.8 313.8M941.5 313.4L949.4 296.5M941.5 313.4L953.1 296.8M948.8 313.8L956.2 314.0M948.8 313.8L953.1 296.8M948.8 313.8L956.8 296.8M956.2 314.0L963.6 313.9M956.2 314.0L956.8 296.8M956.2 314.0L960.5 296.8M963.6 313.9L970.9 313.6M963.6 313.9L960.5 296.8M963.6 313.9L964.2 296.6M970.9 313.6L978.1 313.0M970.9 313.6L964.2 296.6M970.9 313.6L967.9 296.3M978.1 313.0L985.1 312.1M978.1 313.0L967.9 296.3M978.1 313.0L971.4 295.9M985.1 312.1L991.7 311.0M985.1 312.1L971.4 295.9M985.1 312.1L974.7 295.3M991.7 311.0L998.0 309.7M991.7 311.0L974.7 295.3M991.7 311.0L977.9 294.7M998.0 309.7L1003.9 308.2M998.0 309.7L977.9 294.7M998.0 309.7L980.8 293.9M1003.9 308.2L1009.2 306.4M1003.9 308.2L980.8 293.9M1003.9 308.2L983.5 293.0M1009.2 306.4L1014.0 304.5M1009.2 306.4L983.5 293.0M1009.2 306.4L985.9 292.1M1014.0 304.5L1018.1 302.4M1014.0 304.5L985.9 292.1M1014.0 304.5L988.0 291.0M1018.1 302.4L1021.6 300.2M1018.1 302.4L988.0 291.0M1018.1 302.4L989.7 289.9M1021.6 300.2L1024.4 297.9M1021.6 300.2L989.7 289.9M1021.6 300.2L991.1 288.7M1024.4 297.9L1026.5 295.5M1024.4 297.9L991.1 288.7M1024.4 297.9L992.2 287.5M1026.5 295.5L1027.8 293.0M1026.5 295.5L992.2 287.5M1026.5 295.5L992.8 286.3M1027.8 293.0L1028.3 290.5M1027.8 293.0L992.8 286.3M1027.8 293.0L993.1 285.0M993.1 285.0L993.0 283.8M993.1 285.0L957.5 283.0M993.0 283.8L992.5 282.5M993.0 283.8L957.5 283.0M992.5 282.5L991.6 281.3M992.5 282.5L957.5 283.0M991.6 281.3L990.3 280.1M991.6 281.3L957.5 283.0M990.3 280.1L988.7 279.0M990.3 280.1L957.5 283.0M988.7 279.0L986.7 277.9M988.7 279.0L957.5 283.0M986.7 277.9L984.4 276.9M986.7 277.9L957.5 283.0M984.4 276.9L981.8 276.0M984.4 276.9L957.5 283.0M981.8 276.0L979.0 275.2M981.8 276.0L957.5 283.0M979.0 275.2L975.9 274.5M979.0 275.2L957.5 283.0M975.9 274.5L972.6 273.9M975.9 274.5L957.5 283.0M972.6 273.9L969.1 273.4M972.6 273.9L957.5 283.0M969.1 273.4L965.6 273.0M969.1 273.4L957.5 283.0M965.6 273.0L961.9 272.8M965.6 273.0L957.5 283.0M961.9 272.8L958.2 272.7M961.9 272.8L957.5 283.0M958.2 272.7L954.5 272.8M958.2 272.7L957.5 283.0M954.5 272.8L950.8 272.9M954.5 272.8L957.5 283.0M950.8 272.9L947.1 273.3M950.8 272.9L957.5 283.0M947.1 273.3L943.6 273.7M947.1 273.3L957.5 283.0M943.6 273.7L940.3 274.2M943.6 273.7L957.5 283.0M940.3 274.2L937.1 274.9M940.3 274.2L957.5 283.0M937.1 274.9L934.2 275.7M937.1 274.9L957.5 283.0M934.2 275.7L931.5 276.6M934.2 275.7L957.5 283.0M931.5 276.6L929.1 277.5M931.5 276.6L957.5 283.0M929.1 277.5L927.0 278.6M929.1 277.5L957.5 283.0M927.0 278.6L925.3 279.7M927.0 278.6L957.5 283.0M925.3 279.7L923.9 280.8M925.3 279.7L957.5 283.0M923.9 280.8L922.8 282.1M923.9 280.8L957.5 283.0M922.8 282.1L922.2 283.3M922.8 282.1L957.5 283.0M922.2 283.3L921.9 284.6M922.2 283.3L957.5 283.0M921.9 284.6L922.0 285.8M921.9 284.6L957.5 283.0M922.0 285.8L922.5 287.1M922.0 285.8L957.5 283.0M922.5 287.1L923.4 288.3M922.5 287.1L957.5 283.0M923.4 288.3L924.7 289.5M923.4 288.3L957.5 283.0M924.7 289.5L926.3 290.6M924.7 289.5L957.5 283.0M926.3 290.6L928.3 291.7M926.3 290.6L957.5 283.0M928.3 291.7L930.6 292.7M928.3 291.7L957.5 283.0M930.6 292.7L933.2 293.6M930.6 292.7L957.5 283.0M933.2 293.6L936.0 294.4M933.2 293.6L957.5 283.0M936.0 294.4L939.1 295.1M936.0 294.4L957.5 283.0M939.1 295.1L942.4 295.7M939.1 295.1L957.5 283.0M942.4 295.7L945.9 296.2M942.4 295.7L957.5 283.0M945.9 296.2L949.4 296.5M945.9 296.2L957.5 283.0M949.4 296.5L953.1 296.8M949.4 296.5L957.5 283.0M953.1 296.8L956.8 296.8M953.1 296.8L957.5 283.0M956.8 296.8L960.5 296.8M956.8 296.8L957.5 283.0M960.5 296.8L964.2 296.6M960.5 296.8L957.5 283.0M964.2 296.6L967.9 296.3M964.2 296.6L957.5 283.0M967.9 296.3L971.4 295.9M967.9 296.3L957.5 283.0M971.4 295.9L974.7 295.3M971.4 295.9L957.5 283.0M974.7 295.3L977.9 294.7M974.7 295.3L957.5 283.0M977.9 294.7L980.8 293.9M977.9 294.7L957.5 283.0M980.8 293.9L983.5 293.0M980.8 293.9L957.5 283.0M983.5 293.0L985.9 292.1M983.5 293.0L957.5 283.0M985.9 292.1L988.0 291.0M985.9 292.1L957.5 283.0M988.0 291.0L989.7 289.9M988.0 291.0L957.5 283.0M989.7 289.9L991.1 288.7M989.7 289.9L957.5 283.0M991.1 288.7L992.2 287.5M991.1 288.7L957.5 283.0M992.2 287.5L992.8 286.3M992.2 287.5L957.5 283.0M992.8 286.3L993.1 285.0M992.8 286.3L957.5 283.0" stroke="#6c6b62" stroke-width="0.75" stroke-opacity="0.7" fill="none"/>
<circle cx="957.5" cy="603.5" r="340.6" fill="none" stroke="#55544c" stroke-width="1.2" stroke-opacity=".7"/>
<ellipse cx="974" cy="961.5" rx="9" ry="4" fill="none" stroke="#9a9a90" stroke-width="2"/>
</svg>
</div>

<!-- title bar -->
<div id="title" class="a">
<div class="a" style="left:0;top:0;width:1px;height:1080px;background:#3b3b3b"></div>
</div>
<div class="a" style="left:11px;top:9px;width:18px;height:20px;background:#f26a1b;border-radius:3px"></div>
<div class="a" style="left:12px;top:23px;width:16px;height:5px;background:#b84a12;border-radius:0 0 2px 2px"></div>
<div class="t" style="left:16px;top:10px;font-size:12px;font-weight:bold;color:#fff">F</div>
<div class="t" style="left:36px;top:12px;font-size:14.5px;color:#1b1b1b">Autodesk Fusion (Education License)</div>
<div class="a" style="left:1768px;top:18px;width:12px;height:1px;background:#222"></div>
<div class="a" style="left:1826px;top:13px;width:12px;height:12px;border:1px solid #222;border-radius:2px"></div>
<svg style="left:1885px;top:13px" width="12" height="12"><path d="M0 0L12 12M12 0L0 12" stroke="#222" stroke-width="1.2"/></svg>

<!-- QAT -->
<div id="qat" class="a"></div>
<div class="a" style="left:242px;top:43px;width:48px;height:35px;background:#c3c3c3;border-radius:5px 5px 0 0"></div>
<div class="a" style="left:296px;top:43px;width:1331px;height:35px;background:#f2f2f2;border-radius:6px 6px 0 0"></div>
<div class="a" style="left:1632px;top:43px;width:35px;height:35px;background:#c3c3c3;border-radius:5px 5px 0 0"></div>
<div class="t" style="left:940px;top:54px;font-size:15px;color:#3a3a3a">Untitled*</div>


<svg style="left:0;top:0" width="1920" height="80" viewBox="0 0 1920 80">
<g fill="#5f5f5f">
<rect x="12" y="49" width="5" height="5" rx=".8"/><rect x="18.5" y="49" width="5" height="5" rx=".8"/><rect x="25" y="49" width="5" height="5" rx=".8"/>
<rect x="12" y="55.5" width="5" height="5" rx=".8"/><rect x="18.5" y="55.5" width="5" height="5" rx=".8"/><rect x="25" y="55.5" width="5" height="5" rx=".8"/>
<rect x="12" y="62" width="5" height="5" rx=".8"/><rect x="18.5" y="62" width="5" height="5" rx=".8"/><rect x="25" y="62" width="5" height="5" rx=".8"/>
<path d="M54 48H64.5V54H70.5V67.5H54Z"/><path d="M65.5 48L70.5 53H65.5Z"/>
<path d="M77 56H86.5L81.75 62Z"/>
<path d="M110 49H124L127 52V67H110ZM114 50.5V56H123V50.5H120V54.5H117.5V50.5ZM114 67V60.5H123V67H120.5V62.5H116.5V67Z" fill-rule="evenodd"/>
<path d="M176 56H185.5L180.75 62Z"/>
</g>
<path d="M153.5 56.5L159 51M153.5 56.5L159 62M154 56.5H161Q167 56.5 167 65" stroke="#5f5f5f" stroke-width="2.2" fill="none" stroke-linecap="round"/>
<path d="M214.5 56.5L209 51M214.5 56.5L209 62M214 56.5H207Q201 56.5 201 65" stroke="#8a8a8a" stroke-width="2.2" fill="none" stroke-linecap="round"/>
<path d="M224.5 56H234L229.25 62Z" fill="#8a8a8a"/>
<path d="M259 63L268.5 54L278 63H275.5V71.5H262V63Z" fill="#6e6e6e"/><rect x="273" y="55" width="2.5" height="5" fill="#6e6e6e"/>
<rect x="266.5" y="66" width="4" height="5.5" fill="#c3c3c3"/>
<!-- tab cube -->
<path d="M914 56L922.5 51.5L931 56V66L922.5 70.5L914 66Z" fill="#f47a2a"/>
<path d="M914 56L922.5 51.5L931 56L922.5 60.5Z" fill="#ffab6a"/>
<path d="M922.5 60.5L931 56V66L922.5 70.5Z" fill="#d85c14"/>
<path d="M1607.5 55.5L1618.5 66.5M1618.5 55.5L1607.5 66.5" stroke="#555" stroke-width="1.3"/>
<path d="M1649.5 50.5V66.5M1641.5 58.5H1657.5" stroke="#6b6b6b" stroke-width="2.6"/>
<!-- sync -->
<path d="M1690.95 50.21A7.2 7.2 0 1 0 1699.29 56.05" fill="none" stroke="#5c5c5c" stroke-width="4"/>
<path d="M1693.5 51.5L1696 49M1697.5 55L1700.5 52.5" stroke="#5c5c5c" stroke-width="2.2"/>
<path d="M1689 55.5L1693 51.5L1698 56.5L1694 60.5Z" fill="#5c5c5c" opacity=".15"/>
<!-- clock -->
<circle cx="1733" cy="57.5" r="9.3" fill="#5c5c5c"/><circle cx="1733" cy="57.5" r="7.9" fill="#cfcfcf"/><circle cx="1733" cy="57.5" r="7" fill="#5c5c5c"/>
<path d="M1733 52V58H1738" stroke="#e0e0e0" stroke-width="1.3" fill="none"/>
<!-- bell -->
<path d="M1787 66.5Q1789 63 1789 57Q1789 50.5 1794.5 50Q1800 50.5 1800 57Q1800 63 1802 66.5Z" fill="#5f5f5f"/><circle cx="1794.5" cy="68.5" r="1.7" fill="#5f5f5f"/>
<circle cx="1799.5" cy="52" r="3.6" fill="#1a8ee0" stroke="#cfcfcf" stroke-width="1"/>
<!-- help -->
<circle cx="1836" cy="58" r="10" fill="#5f5f5f"/>
<path d="M1832.3 55.5Q1832.3 51.5 1836 51.5Q1839.8 51.5 1839.8 55Q1839.8 57 1837.5 58.3Q1836 59.2 1836 61" stroke="#cfcfcf" stroke-width="2.3" fill="none"/><circle cx="1836" cy="64.3" r="1.4" fill="#cfcfcf"/>
<!-- avatar -->
<clipPath id="av"><circle cx="1887" cy="58" r="15"/></clipPath>
<circle cx="1887" cy="58" r="15" fill="#a9bcd6"/>
<g clip-path="url(#av)" fill="#4f6f95"><ellipse cx="1887" cy="53" rx="6.5" ry="8.5"/><path d="M1872 76Q1874 65 1881 62H1893Q1900 65 1902 76Z"/></g>
</svg>
<div class="t" style="left:1747px;top:52px;font-size:13px;color:#333">1</div>

<!-- ribbon -->
<div id="ribbon" class="a"></div>
<div class="a" style="left:16px;top:91px;width:137px;height:76px;border:1px solid #d3d3d3;border-radius:5px;background:#f1f1f1"></div>
<div class="t" style="left:52px;top:122px;font-size:13.5px;font-weight:bold;color:#333">DESIGN<span class="dd" style="border-left-width:3.8px;border-right-width:3.8px;border-top-width:5.5px;margin-left:6px"></span></div>
<div class="t tab" style="left:189px">SOLID</div>
<div class="t tab" style="left:286px">SURFACE</div>
<div class="t tab" style="left:409px;color:#0a8fd0;font-weight:bold">MESH</div>
<div class="a" style="left:394px;top:104px;width:69px;height:3px;background:#0a8fd0"></div>
<div class="t tab" style="left:506px">SHEET METAL</div>
<div class="t tab" style="left:660px">PLASTIC</div>
<div class="t tab" style="left:776px">UTILITIES</div>

<div class="sep" style="left:332px"></div>
<div class="sep" style="left:507px"></div>
<div class="sep" style="left:950px"></div>
<div class="sep" style="left:1073px"></div>
<div class="sep" style="left:1203px"></div>
<div class="sep" style="left:1333px"></div>
<div class="sep" style="left:1437px"></div>
<div class="sep" style="left:1559px"></div>
<div class="sep" style="left:1658px"></div>

<div class="a" style="left:512px;top:157px;width:434px;height:20px;background:#0696d7"></div>
<div class="t grp" style="left:211px">CREATE<span class="dd"></span></div>
<div class="t grp" style="left:380px">PREPARE<span class="dd"></span></div>
<div class="t grp" style="left:695px;color:#fff">MODIFY<span class="dd"></span></div>
<div class="t grp" style="left:969px">ASSEMBLE<span class="dd"></span></div>
<div class="t grp" style="left:1092px">CONFIGURE<span class="dd"></span></div>
<div class="t grp" style="left:1222px">CONSTRUCT<span class="dd"></span></div>
<div class="t grp" style="left:1351px">INSPECT<span class="dd"></span></div>
<div class="t grp" style="left:1468px">INSERT<span class="dd"></span></div>
<div class="t grp" style="left:1578px">SELECT<span class="dd"></span></div>
<div class="t grp" style="left:1677px">EXPORT<span class="dd"></span></div>


<!-- ribbon icons -->
<svg style="left:0;top:0" width="1920" height="200" viewBox="0 0 1920 200">
<defs>
<pattern id="gm" width="9" height="9" patternUnits="userSpaceOnUse"><path d="M0 9L9 0M0 4.5H9" stroke="#b8953c" stroke-width="0.7" fill="none"/></pattern>
</defs>
<!-- CREATE 1: insert mesh -->
<path d="M180 125L186 118H205L212 125V145L205 151H186L180 145Z" fill="#dcbb62" stroke="#c9a54a" stroke-width="0.8"/>
<path d="M180 125L186 118H205L212 125L205 131H186Z" fill="#c9a44a"/>
<path d="M180 125L186 118H205L212 125V145L205 151H186L180 145Z" fill="url(#gm)" opacity=".6"/>
<path d="M172 117H182V112L194 120L182 127V122H172Z" fill="#1b8ee8" stroke="#fff" stroke-width="0.6"/>
<!-- CREATE 2: convert -->
<defs><linearGradient id="cyl" x1="0" y1="0" x2="1" y2="0"><stop offset="0" stop-color="#cfcfcf"/><stop offset=".45" stop-color="#f4f4f4"/><stop offset="1" stop-color="#c8c8c8"/></linearGradient></defs><path d="M227.5 116A8.5 3.5 0 0 1 244.5 116V130.5A8.5 3.5 0 0 1 227.5 130.5Z" fill="url(#cyl)" stroke="#6f6f6f" stroke-width="1.2"/><path d="M227.5 116A8.5 3.5 0 0 0 244.5 116" fill="none" stroke="#9a9a9a" stroke-width=".8"/>
<path d="M231 139V146H239" stroke="#222" stroke-width="1.3" fill="none"/><path d="M238 143L242 146L238 149Z" fill="#222"/>
<path d="M245 132L249 128H262L266 132V148L262 152H249L245 148Z" fill="#dcbb62" stroke="#c9a54a" stroke-width="0.8"/>
<path d="M245 132L249 128H262L266 132V148L262 152H249L245 148Z" fill="url(#gm)" opacity=".6"/>
<!-- CREATE 3: plane -->
<path d="M288 133H310V142L305 147H293L288 142Z" fill="#dcbb62"/>
<path d="M288 133H310V142L305 147H293L288 142Z" fill="url(#gm)" opacity=".6"/>
<path d="M281 131.5L288 116H318L311 131.5Z" fill="#ea8c4c"/>
<path d="M289 123.5L293 119H305L309.5 123.5L305 128H293Z" fill="#fff" stroke="#3d8ed8" stroke-width="1.2"/>
<rect x="294" y="122" width="10.5" height="3.5" rx="1.7" fill="#ea8c4c"/>
<!-- PREPARE 1: repair -->
<path d="M347 121L356 112H382V137L372 146H347Z" fill="#e6c46a"/>
<path d="M347 121L356 112H382L372 121Z" fill="#f2d680"/>
<path d="M372 121L382 112V137L372 146Z" fill="#d2ae50"/>
<rect x="356" y="141" width="31" height="11" rx="5.5" fill="#9f7c5c" stroke="#f5eee0" stroke-width="1"/>
<rect x="367" y="141.5" width="9" height="10" fill="#ead4bc"/>
<!-- PREPARE 2: colored hex -->
<path d="M403 123L411 114H431L439 123V140L431 148H411L403 140Z" fill="#e86868"/>
<path d="M411 114H431V128H411Z" fill="#4dbb73"/>
<path d="M403 123L411 114V128H403Z" fill="#22c8c8"/>
<path d="M403 128H411V148L403 140Z" fill="#f2a472"/>
<path d="M431 114L439 123V128H431Z" fill="#f0d27a"/>
<path d="M431 128H439V140L431 148Z" fill="#3d8ad4"/>
<path d="M411 114L431 128M411 128L431 148M403 140H439" stroke="#000" stroke-opacity=".15" stroke-width=".8"/>
<!-- PREPARE 3 -->
<path d="M455 121L462 112H481L488 121V140L481 146H462L455 140Z" fill="#dcbb62" stroke="#b8953c" stroke-width="0.8"/>
<rect x="462" y="125" width="19" height="10" fill="#3d8ad4"/>
<rect x="462" y="136" width="19" height="10" fill="#e86868"/>
<path d="M462 112V146M481 112V146" stroke="#b8953c" stroke-width=".8"/>
<path d="M485 137V150.5M478.5 143.7H492" stroke="#fff" stroke-width="6"/>
<path d="M485 137V150.5M478.5 143.7H492" stroke="#1fa64b" stroke-width="3.4"/>
<!-- MODIFY 1: remesh --><g id="g_rm">
<rect x="522.5" y="113" width="18" height="35.5" fill="#fbfbfb" stroke="#707070" stroke-width="1"/>
<path d="M524 147L531 114L539 147" stroke="#9a9a9a" stroke-width=".6" fill="none"/>
<rect x="543.5" y="113" width="18.5" height="35.5" fill="#dcbb62"/>
<rect x="543.5" y="113" width="18.5" height="35.5" fill="url(#gm)" opacity=".7"/>
<path d="M536 131H545" stroke="#111" stroke-width="2"/><path d="M544 127L549 131L544 135Z" fill="#111"/>
</g>
<!-- MODIFY 2: reduce --><g id="g_rd">
<rect x="576.5" y="113" width="18" height="35.5" fill="#fbfbfb" stroke="#707070" stroke-width="1"/>
<path d="M577 122H594M577 131H594M577 140H594M585.5 113V148M577 122L585.5 113M577 131L594 113M577 140L594 122M577 148L594 131M585.5 148L594 140" stroke="#b0b0b0" stroke-width=".7" fill="none"/>
<rect x="597.5" y="113" width="18.5" height="35.5" fill="#dcbb62"/>
<path d="M597.5 148L616 113M597.5 131L616 131" stroke="#b8953c" stroke-width=".7"/>
<path d="M590 131H599" stroke="#111" stroke-width="2"/><path d="M598 127L603 131L598 135Z" fill="#111"/>
</g>
<!-- MODIFY 3: plane cut --><g id="g_pc">
<path d="M637 121L644 114H661.5L645 124V147L637 140Z" fill="#dcbb62"/>
<path d="M637 121L644 114H661.5L645 124V147L637 140Z" fill="url(#gm)" opacity=".7"/>
<path d="M645 124L661.5 114.5V138L645 147Z" fill="#f0905a" stroke="#f6d8b8" stroke-width=".8"/>
</g>
<!-- MODIFY 4: shell --><g id="g_sh">
<path d="M684 121L692.5 112.5H722V142L713.5 151H684Z" fill="#f4f4f4" stroke="#6a6a6a" stroke-width="1.6"/>
<path d="M713.5 121L722 112.5V142L713.5 151Z" fill="#d6d6d6"/>
<path d="M684 121L692.5 112.5H722L713.5 121Z" fill="#fafafa" stroke="#6a6a6a" stroke-width="0"/>
<path d="M684 121L692.5 112.5H722V142L713.5 151H684Z" fill="none" stroke="#6a6a6a" stroke-width="1.6"/>
<path d="M687.5 124.5H709.5V147H687.5Z" fill="#ffffff"/>
<path d="M688 127H697.5V137H708V147H688Z" fill="#d7b34e"/>
</g>
<!-- MODIFY 5: combine --><g id="g_cb">
<path d="M751 119L756 112H777V140L772 145H751Z" fill="#dcbb62"/>
<path d="M772 119L777 112V140L772 145Z" fill="#c9a54a"/>
<path d="M751 119L756 112H777L772 119Z" fill="#ead07a"/>
<path d="M737 131L742 126H763V147L758 152H737Z" fill="#e0c068" stroke="#f4ecd0" stroke-width=".6"/>
<path d="M758 131L763 126V147L758 152Z" fill="#c9a54a"/>
<path d="M737 131L742 126H763L758 131Z" fill="#ead07a"/>
</g>
<!-- MODIFY 6: move --><g id="g_mv">
<path d="M811 116V148M795 132H827" stroke="#333" stroke-width="2.2"/>
<path d="M811 112L805 120H817Z M811 152L805 144H817Z M792 132L800 126V138Z M831 132L823 126V138Z" fill="#333"/>
</g>
<!-- MODIFY 7: scale --><g id="g_sc">
<rect x="846" y="113" width="37" height="37.5" fill="#dcbb62"/>
<rect x="846.5" y="129" width="20.5" height="21" fill="#f6f6f6" stroke="#6a6a6a" stroke-width="1.2"/>
</g>
<!-- MODIFY 8: direct edit --><g id="g_de">
<path d="M898 126L904 118H926L933 126V145L926 151.5H904L898 145Z" fill="#dcbb62" stroke="#b8953c" stroke-width=".8"/>
<path d="M898 126L904 118H926L933 126L926 132H904Z" fill="#c6a148"/>
<path d="M898 126L904 118H926L933 126V145L926 151.5H904L898 145Z" fill="url(#gm)" opacity=".6"/>
<path d="M927 113L929.5 119.5L936 117L932 122.5L938 126L931 127L932 133L927.5 128.5L923 133L923.5 127L917 126L922.5 122.5L918.5 117L925 119.5Z" fill="#f6a500" stroke="#fff6d8" stroke-width="1"/>
</g>
<!-- ASSEMBLE 1 -->
<path d="M966 133H1001V152H966Z" fill="#dcdcdc" stroke="#6a6a6a" stroke-width="1"/>
<path d="M982 133V152M966 142.5" stroke="#6a6a6a" stroke-width="1"/>
<path d="M996 133L1001 128V147L996 152Z" fill="#bdbdbd"/>
<path d="M966 120L969 116H986V133H966Z" fill="#4da0e6"/>
<path d="M966 120L969 116H986L983 120Z" fill="#8cc4f0"/>
<path d="M983 120L986 116V133L983 136Z" fill="#2f80c8"/>
<path d="M995 112L997.5 119L1004 116.5L1000.5 122.5L1006 126L999 127L1000 133L995.5 128.5L991 133L991.5 127L985 126L990.5 122.5L986.5 116.5L993 119Z" fill="#f6a500" stroke="#fff6d8" stroke-width=".8"/>
<!-- ASSEMBLE 2: joint -->
<path d="M1023 120L1032 114L1035 116V136L1032 138V145L1023 148Z" fill="#cfcfcf" stroke="#666" stroke-width="1.3"/>
<path d="M1057 126L1049 117L1046 120V127L1043 128V143L1049 141L1057 148Z" fill="#d6d6d6" stroke="#666" stroke-width="1.3"/>
<path d="M1034 120V136M1045 121V128" stroke="#2f80c8" stroke-width="1"/>
<!-- CONFIGURE 1 -->
<path d="M1092 120L1100 111.5H1127V138L1119 147H1092Z" fill="#e2e2e2" stroke="#777" stroke-width="1"/>
<path d="M1119 120L1127 111.5V138L1119 147Z" fill="#c9c9c9"/>
<path d="M1092 120L1100 111.5H1127L1119 120Z" fill="#f0f0f0"/>
<path d="M1116 140.5H1132M1116 148H1132" stroke="#666" stroke-width="2"/>
<path d="M1119.5 137V144M1127 144.5V151.5" stroke="#2f80c8" stroke-width="2.2"/><path d="M1127 144.5V151.5" stroke="#666" stroke-width="2.2"/>
<path d="M1119.5 137V144" stroke="#2f80c8" stroke-width="2.4"/>
<!-- CONFIGURE 2 -->
<rect x="1146.5" y="112" width="36.5" height="36" fill="#fafafa" stroke="#666" stroke-width="1"/>
<rect x="1146.5" y="112" width="36.5" height="6.5" fill="#666"/>
<rect x="1149" y="114" width="4" height="2.5" fill="#ddd"/>
<path d="M1150.5 123.5H1180M1150.5 130.5H1180M1150.5 137.5H1167M1150.5 123.5V142.5H1165M1156 123.5V142.5M1162 123.5V142.5M1180 123.5V132" stroke="#666" stroke-width="1.2" fill="none"/>
<path d="M1169 140.5H1186M1169 148H1186" stroke="#666" stroke-width="2"/>
<path d="M1173.5 137V144" stroke="#2f80c8" stroke-width="2.4"/><path d="M1181 144.5V151.5" stroke="#666" stroke-width="2.4"/>
<!-- CONSTRUCT -->
<path d="M1251.5 123L1262.5 112H1271L1261 123V150.5H1251.5Z" fill="#dadada" stroke="#555" stroke-width="1.2"/>
<path d="M1262 122.5L1273 112V137.5L1262 149Z" fill="#4cc474"/>
<path d="M1277.5 123L1288.5 112V137.5L1277.5 150Z" fill="#f09a5c"/>
<!-- INSPECT -->
<rect x="1370" y="134" width="35" height="7.5" fill="#f5a800"/>
<path d="M1372 136V138.5M1375 136V138.5M1378 136V138.5M1381 136V138.5M1384 136V138.5M1387 136V138.5M1390 136V138.5M1393 136V138.5M1396 136V138.5M1399 136V138.5M1402 136V138.5" stroke="#8a5c00" stroke-width=".8"/>
<path d="M1370.5 122V133M1404.5 122V133M1372 127.5H1403" stroke="#666" stroke-width="1.3"/>
<path d="M1371 127.5L1375 125V130Z M1404 127.5L1400 125V130Z" fill="#666"/>
<!-- INSERT 1: bolt -->
<rect x="1456" y="113.5" width="30" height="8.5" rx="1.5" fill="#6cb0ea" stroke="#4a90d0" stroke-width=".6"/>
<rect x="1462" y="122" width="17" height="29" fill="#7ab8ec"/>
<path d="M1462 125H1479M1462 128.5H1479M1462 132H1479M1462 135.5H1479M1462 139H1479M1462 142.5H1479M1462 146H1479M1462 149.5H1479" stroke="#4a90d0" stroke-width=".8"/>
<path d="M1484.5 134V151.5M1476 142.7H1493" stroke="#fff" stroke-width="6"/>
<path d="M1484.5 134V151.5M1476 142.7H1493" stroke="#1fa64b" stroke-width="3.4"/>
<!-- INSERT 2: image -->
<rect x="1509" y="113.5" width="36" height="35" fill="#86c6f5" stroke="#4a90d0" stroke-width=".8"/>
<path d="M1509 140L1518 129L1527 138L1531 134L1545 143V148.5H1509Z" fill="#4a8fd0"/>
<circle cx="1534.5" cy="123" r="3.6" fill="#fdf8d8"/>
<!-- SELECT -->
<rect x="1586" y="108" width="47" height="47" fill="#0d96dc"/>
<rect x="1590.5" y="112" width="35" height="27" fill="none" stroke="#7fe0f0" stroke-width="1.2" stroke-dasharray="3 2"/>
<path d="M1616 130L1616 150L1621 145.5L1625 153L1628 151.5L1624.5 144H1630Z" fill="#fff"/>
<!-- EXPORT -->
<path d="M1690.5 121L1695 114.5H1722L1726.5 121V145Q1726.5 148 1723.5 148H1693.5Q1690.5 148 1690.5 145Z" fill="#e4e4e4" stroke="#666" stroke-width="1.2"/>
<rect x="1692" y="128" width="33" height="18.5" rx="2" fill="#666"/>
<path d="M1696 141L1702.5 133L1708 139L1713.5 133L1720 141Z" fill="#fff"/>
<path d="M1708 136L1705 131Q1708 127 1711 131Z" fill="#f07a30"/>
<rect x="1719" y="122.5" width="3.5" height="3.5" fill="#666"/>
</svg>


<svg style="left:0;top:0" width="1920" height="400" viewBox="0 0 1920 400">
<defs><linearGradient id="vcf" x1="0" y1="0" x2="0" y2="1"><stop offset="0" stop-color="#f4f4f4"/><stop offset="1" stop-color="#dedede"/></linearGradient>
<radialGradient id="vcs" cx=".5" cy=".5" r=".5"><stop offset="0" stop-color="#000" stop-opacity=".18"/><stop offset="1" stop-color="#000" stop-opacity="0"/></radialGradient></defs>
<ellipse cx="1862" cy="283" rx="36" ry="9" fill="url(#vcs)"/>
<path d="M1823.3 227.8L1846.7 218.3L1888.3 221.1L1866.7 232.8Z" fill="#f2f2f2"/>
<path d="M1866.7 232.8L1888.3 221.1L1887.8 263.9L1867.2 285Z" fill="#dcdcdc"/>
<path d="M1823.3 227.8L1866.7 232.8L1867.2 285L1826.1 273.9Z" fill="url(#vcf)"/>
<g fill="none" stroke="#777" stroke-width=".9" stroke-dasharray="3 1.5">
<path d="M1823.3 227.8L1846.7 218.3L1888.3 221.1L1866.7 232.8Z"/>
<path d="M1888.3 221.1L1887.8 263.9L1867.2 285M1866.7 232.8L1867.2 285"/>
</g>
<text x="1831" y="261" font-family="Liberation Sans" font-size="11.5" font-weight="bold" fill="#808080" transform="rotate(6 1845 255)" textLength="29" lengthAdjust="spacingAndGlyphs">FRONT</text>
<text x="0" y="0" text-anchor="end" font-family="Liberation Sans" font-size="9" font-weight="bold" fill="#8a8a8a" transform="translate(1874 262) rotate(-62) scale(-1 1)" textLength="19" lengthAdjust="spacingAndGlyphs">RIGHT</text>
<path d="M1820.6 221L1826.1 274.4" stroke="#5a5ae6" stroke-width="2"/>
<path d="M1826.1 274.4L1876.7 286.7" stroke="#f08a8a" stroke-width="2"/>
<text x="1815.5" y="217.5" font-family="Liberation Sans" font-size="13" font-weight="bold" fill="#6a6ae6">Z</text>
<text x="1878.5" y="293.5" font-family="Liberation Sans" font-size="13" fill="#f07a7a">X</text>
</svg>

<!-- browser -->
<div class="a" style="left:6px;top:189px;width:374px;height:31px;background:#f0f0f0;border:1px solid #cfcfcf"></div>
<div class="t" style="left:37px;top:197px;font-size:14.2px;color:#6a6a6a">BROWSER</div>
<div class="a" style="left:355px;top:199px;width:11px;height:11px;border-radius:50%;background:#2e2e2e"></div>
<div class="a" style="left:357px;top:204px;width:7px;height:1.5px;background:#fff"></div>


<div class="a" style="left:50px;top:226px;width:191px;height:25px;background:rgba(236,236,236,.75)"></div>
<div class="a" style="left:74px;top:256px;width:167px;height:25px;background:rgba(236,236,236,.75)"></div>
<div class="a" style="left:74px;top:286px;width:137px;height:25px;background:rgba(236,236,236,.75)"></div>
<div class="a" style="left:74px;top:316px;width:123px;height:25px;background:rgba(236,236,236,.75)"></div>
<div class="a" style="left:74px;top:346px;width:128px;height:25px;background:rgba(236,236,236,.75)"></div>
<div class="a" style="left:88px;top:229px;width:123px;height:19.5px;background:#8f8f8f"></div>
<div class="a" style="left:119px;top:229px;width:1px;height:19.5px;background:#a6a6a6"></div>
<div class="a" style="left:53px;top:229px;width:3.5px;height:19px;background:#f2a4ac"></div>
<svg style="left:0;top:0" width="400" height="400" viewBox="0 0 400 400">
<path d="M29 243L38 234.5V243Z" fill="#222"/>
<path d="M61.5 238.5Q71 229.5 80.5 238.5Q71 247.5 61.5 238.5Z" fill="#8c8c8c"/><circle cx="71" cy="238.5" r="3.2" fill="#f0f0f0"/><circle cx="71" cy="238.5" r="1.6" fill="#8c8c8c"/>
<path d="M95 233L98.5 230H110V242L106.5 245.5H95Z" fill="#e9ecf0" stroke="#333" stroke-width="1"/>
<path d="M106.5 233.5L110 230V242L106.5 245.5Z" fill="#b8bcc4"/>
<circle cx="224.5" cy="238.2" r="7.7" fill="#e8e8ec" stroke="#6a6a6a" stroke-width="1.2"/><circle cx="224.5" cy="238.2" r="2.8" fill="#333a48"/>
<g fill="none" stroke="#333" stroke-width="1.3" stroke-linejoin="round">
<path d="M52 263.5L60 269L52 274.5Z"/><path d="M52 293.5L60 299L52 304.5Z"/><path d="M52 323.5L60 329L52 334.5Z"/><path d="M52 353.5L60 359L52 364.5Z"/>
</g>
<g fill="#6a6a6a">
<circle cx="85" cy="268.2" r="5.6"/>
<path d="M83.3 259.8h3.4v3h-3.4zM83.3 273.6h3.4v3h-3.4zM76.6 266.5h3v3.4h-3zM90.4 266.5h3v3.4h-3z"/>
<path d="M78.3 262.7l2.4-2.4 2.2 2.2-2.4 2.4zM87.1 271.5l2.4-2.4 2.2 2.2-2.4 2.4zM78.3 273.7l2.2-2.2 2.4 2.4-2.2 2.2zM87.1 264.9l2.2-2.2 2.4 2.4-2.2 2.2z"/>
</g>
<circle cx="85" cy="268.2" r="2.3" fill="#f0f0f0"/>
<g fill="#8f8f8f">
<path d="M77 291H84L85 292.5H97V306.5H77Z"/>
<path d="M108 321H115L116 322.5H128.5V336.5H108Z"/>
<path d="M108 351H115L116 352.5H128.5V366.5H108Z"/>
</g>
<g fill="#e8e8e8"><rect x="77" y="293.5" width="20" height="1"/><rect x="108" y="323.5" width="20.5" height="1"/><rect x="108" y="353.5" width="20.5" height="1"/></g>
<path d="M78 328.5Q87.5 319.5 97 328.5Q87.5 337.5 78 328.5Z" fill="none" stroke="#a6a6a6" stroke-width="1.6"/><circle cx="87.5" cy="328.5" r="2.4" fill="none" stroke="#a6a6a6" stroke-width="1.4"/><path d="M80 336L95 321" stroke="#a6a6a6" stroke-width="1.6"/>
<path d="M78 358.5Q87.5 349.5 97 358.5Q87.5 367.5 78 358.5Z" fill="#8c8c8c"/><circle cx="87.5" cy="358.5" r="3.2" fill="#f0f0f0"/><circle cx="87.5" cy="358.5" r="1.6" fill="#8c8c8c"/>
<path d="M18 205L24.5 200.5V209.5Z M12 205L18.5 200.5V209.5Z" fill="#333"/>
</svg>
<div class="t" style="left:130px;top:233px;font-size:13.5px;font-weight:bold;color:#fff">(Unsaved)</div>
<div class="t" style="left:110px;top:262.5px;font-size:13.8px;color:#444">Document Settings</div>
<div class="t" style="left:115px;top:292.5px;font-size:13.8px;color:#444">Named Views</div>
<div class="t" style="left:146px;top:322.5px;font-size:13.8px;color:#444">Origin</div>
<div class="t" style="left:146px;top:352.5px;font-size:13.8px;color:#444">Bodies</div>

<!-- comments -->
<div class="a" style="left:6px;top:986px;width:374px;height:30px;background:#f0f0f0;border:1px solid #cfcfcf"></div>
<div class="t" style="left:37px;top:994px;font-size:14.2px;color:#6a6a6a">COMMENTS</div>
<div class="a" style="left:355px;top:996px;width:11px;height:11px;border-radius:50%;background:#2e2e2e"></div>

<!-- nav bar -->
<div class="a" style="left:814px;top:985.5px;width:297px;height:29px;background:#f0f0f0"></div>

<!-- bottom -->
<div id="bottom" class="a"></div>


<svg style="left:0;top:0" width="1920" height="1080" viewBox="0 0 1920 1080">
<!-- nav icons -->
<g fill="none" stroke="#555" stroke-width="1.1">
<ellipse cx="827.5" cy="999" rx="9" ry="5.5"/><ellipse cx="827.5" cy="999" rx="4.5" ry="9.5"/>
</g>
<path d="M826 999H830M828 997V1001" stroke="#333" stroke-width="1"/>
<path d="M844 997H851.5L847.75 1002Z M982.5 997H990L986.25 1002Z M1020.5 997H1028L1024.25 1002Z M1058.5 997H1066L1062.25 1002Z M1097 997H1104.5L1100.75 1002Z" fill="#222"/>
<rect x="859.5" y="996" width="17.5" height="11.5" fill="#e8e8e8" stroke="#777" stroke-width="1"/>
<rect x="862" y="999" width="12.5" height="5.5" fill="#999"/>
<path d="M861 996L864 991.5L873 990.5L874.5 996" fill="#ccc" stroke="#777" stroke-width=".9"/>
<path d="M895 1007Q891 1002 892 998Q893 996.5 895 998.5V991.5Q896.5 989.5 898 991.5V997M898 997V989.5Q899.5 988 901 989.5V997M901 997V990Q902.5 988.5 904 990V997.5M904 997.5V992Q905.5 990.5 907 992V1000Q907 1005 904 1008H896Z" fill="#fff" stroke="#555" stroke-width="1"/>
<circle cx="930.5" cy="996" r="6.3" fill="#eef4f8" stroke="#444" stroke-width="1.3"/>
<path d="M935 1000.5L942 1007.5" stroke="#333" stroke-width="2.6"/>
<path d="M937.5 991H942M939.75 988.7V993.3M937.5 995.5H942" stroke="#333" stroke-width="1"/>
<circle cx="963" cy="996" r="6.3" fill="#f6f6f6" stroke="#444" stroke-width="1.3"/>
<rect x="960" y="993" width="6" height="6" fill="none" stroke="#555" stroke-width="1"/>
<path d="M967.5 1000.5L974.5 1007.5" stroke="#333" stroke-width="2.6"/>
<rect x="998.5" y="990" width="18" height="14" fill="#8db8ea" stroke="#555" stroke-width="1.2"/>
<path d="M1007.5 1004V1007M1003 1008H1012" stroke="#777" stroke-width="1.6"/>
<rect x="1036.5" y="990" width="18" height="18" fill="#d8d8d8" stroke="#555" stroke-width="1"/>
<path d="M1036.5 994.5H1054.5M1036.5 999H1054.5M1036.5 1003.5H1054.5M1041 990V1008M1045.5 990V1008M1050 990V1008" stroke="#666" stroke-width=".8"/>
<rect x="1075.5" y="991" width="18" height="15.5" fill="#7eaee4" stroke="#3d5f90" stroke-width="1"/>
<path d="M1084.5 991V1006.5M1075.5 998.75H1093.5" stroke="#3d5f90" stroke-width="1.2"/>
<!-- bottom timeline -->
<g fill="#5a5a5a">
<rect x="14.5" y="1047" width="2.3" height="14.5"/><path d="M28.7 1046.5V1062L17 1054.25Z"/>
<path d="M45.3 1054L58 1046.5V1061.5Z"/><rect x="59.3" y="1050.5" width="2.7" height="7"/>
<path d="M77 1044.6L92.2 1053.3L77 1062Z"/>
<rect x="107.2" y="1050.5" width="2.7" height="7"/><path d="M111 1046.5L123.2 1054L111 1061.5Z"/>
<path d="M139 1046.5V1062L150.8 1054.25Z"/><rect x="151" y="1047" width="2.3" height="14.5"/>
</g>
<rect x="181.3" y="1033" width="84.6" height="7.4" fill="#f9a9a9"/>
<circle cx="194.1" cy="1052.9" r="9.8" fill="#6db9f6"/>
<path d="M184.5 1051Q194 1057 203.7 1051A9.8 9.8 0 0 1 184.5 1054Z" fill="#5aa6e6" opacity=".6"/>
<path d="M224 1044.5V1061.3M215.5 1052.9H232.5" stroke="#222" stroke-width="1.8"/>
<path d="M224 1043L220.7 1047.5H227.3Z M224 1062.8L220.7 1058.3H227.3Z M214 1052.9L218.5 1049.6V1056.2Z M234 1052.9L229.5 1049.6V1056.2Z" fill="#222"/>
<rect x="244.5" y="1043" width="7" height="11" rx="2" fill="#eee" stroke="#999" stroke-width=".8"/>
<path d="M252.5 1050.5L255 1048.5H261.5L263.5 1050.5V1059.5L261.5 1061.5H255L252.5 1059.5Z" fill="#d8b65c"/>
<path d="M246 1056.5V1060H250" stroke="#333" stroke-width=".8" fill="none"/>
<path d="M261.5 1036H276V1040L270 1044.5H267.5L261.5 1040Z" fill="#555"/>
<rect x="267" y="1044" width="3.2" height="31.5" fill="#555"/>
<path d="M195 1067V1075H254.5V1067M224.5 1067V1075" stroke="#c8c8c8" stroke-width="2" fill="none"/>
<!-- settings gear -->
<g fill="#6a6a6a" transform="translate(1894.5 1053)">
<circle r="6.6"/>
<path d="M-1.9 -9.2h3.8v3.6h-3.8zM-1.9 5.6h3.8v3.6h-3.8zM-9.2 -1.9h3.6v3.8h-3.6zM5.6 -1.9h3.6v3.8h-3.6z"/>
<g transform="rotate(45)"><path d="M-1.9 -9.2h3.8v3.6h-3.8zM-1.9 5.6h3.8v3.6h-3.8zM-9.2 -1.9h3.6v3.8h-3.6zM5.6 -1.9h3.6v3.8h-3.6z"/></g>
<circle r="2.6" fill="#f0f0f0"/>
</g>
<!-- comments plus -->
<path d="M357.5 1001.5H363.5M360.5 998.5V1004.5" stroke="#fff" stroke-width="1.5"/>
</svg>

<!-- menu -->
<div class="a" style="left:513px;top:178px;width:231px;height:488px;background:#fff;border:1px solid #7c7c7c;border-radius:3px"></div>
<div class="a" style="left:519px;top:207px;width:218px;height:25px;background:#d9d9d9"></div>
<div class="mi" style="top:187px">Direct Edit</div>
<div class="mi" style="top:212px">Remesh</div>
<div class="mi" style="top:237px">Reduce</div>
<div class="mi" style="top:262px">Plane Cut</div>
<div class="mi" style="top:287px">Shell</div>
<div class="mi" style="top:312px">Combine</div>
<div class="mi" style="top:337px">Smooth</div>
<div class="mi" style="top:362px">Reverse Normal</div>
<div class="msep" style="top:382px"></div>
<div class="mi" style="top:388px">Separate</div>
<div class="msep" style="top:408px"></div>
<div class="mi" style="top:415px">Move/Copy</div><div class="ms" style="top:415px">M</div>
<div class="mi" style="top:440px">Scale Mesh</div>
<div class="mi" style="top:465px">Delete</div><div class="ms" style="top:465px">Del</div>
<div class="mi" style="top:490px">Remove</div>
<div class="msep" style="top:510px"></div>
<div class="mi" style="top:516px">Convert Mesh</div>
<div class="msep" style="top:536px"></div>
<div class="mi" style="top:542px">Physical Material</div>
<div class="mi" style="top:567px">Appearance</div><div class="ms" style="top:567px">A</div>
<div class="mi" style="top:592px">Volumetric Lattice</div>
<div class="msep" style="top:612px"></div>
<div class="mi" style="top:618px">Change Parameters</div>
<div class="mi" style="top:643px">Compute All</div><div class="ms" style="top:643px">Ctrl+B</div>

<svg style="left:0;top:0" width="800" height="700" viewBox="0 0 800 700"><use href="#g_de" transform="translate(53.54,124.76) scale(0.52)"/><use href="#g_rm" transform="translate(238.62,148.48) scale(0.54)"/><use href="#g_rd" transform="translate(209.46,173.48) scale(0.54)"/><use href="#g_pc" transform="translate(206.00,204.20) scale(0.5)"/><use href="#g_sh" transform="translate(179.50,228.50) scale(0.5)"/><use href="#g_cb" transform="translate(152.50,253.00) scale(0.5)"/><use href="#g_mv" transform="translate(132.92,357.62) scale(0.49)"/><use href="#g_sc" transform="translate(81.08,378.24) scale(0.52)"/>
<!-- smooth -->
<path d="M521 338Q521 334.5 530.5 334.5Q540 334.5 540 338V350Q540 353.5 530.5 353.5Q521 353.5 521 350Z" fill="#d8b65c"/>
<path d="M521 338Q521 341.5 530.5 341.5Q540 341.5 540 338M521 344.5Q521 348 530.5 348Q540 348 540 344.5" stroke="#b8953c" stroke-width=".8" fill="none"/>
<!-- reverse normal -->
<rect x="521" y="359" width="17" height="18" fill="#dcbb62"/>
<path d="M521 377L529.5 359L538 377" stroke="#b8953c" stroke-width=".7" fill="none"/>
<rect x="530.5" y="373" width="11" height="6.5" fill="#fff"/><rect x="531.5" y="374" width="9" height="4.5" fill="#222"/><rect x="533.5" y="375.2" width="5" height="2" fill="#fff"/>
<!-- separate -->
<rect x="521" y="385" width="8.5" height="16" fill="#dcbb62"/><rect x="532.5" y="385" width="8.5" height="16" fill="#dcbb62"/>
<path d="M521 393H529.5M532.5 393H541M521 401L529.5 385M532.5 401L541 385" stroke="#b8953c" stroke-width=".6"/>
<path d="M522.5 404.5H539.5" stroke="#333" stroke-width="1"/><path d="M521.5 404.5L524 403V406ZM540.5 404.5L538 403V406Z" fill="#333"/>
<!-- delete -->
<path d="M522.5 464.5L537.5 479.5M537.5 464.5L522.5 479.5" stroke="#e53535" stroke-width="3.4"/>
<!-- remove -->
<circle cx="534.5" cy="497.3" r="5.3" fill="#9ec4ea" stroke="#4f7fb8" stroke-width="1"/>
<path d="M530 497.3H524" stroke="#111" stroke-width="2.6"/><path d="M520.5 497.3L526.5 492.5V502Z" fill="#111"/>
<!-- convert mesh -->
<rect x="521" y="512.5" width="8.5" height="13" rx="2" fill="#d8b65c" stroke="#b8953c" stroke-width=".6"/>
<path d="M529.5 522Q529.5 520 534 520Q538.5 520 538.5 522V530Q538.5 532 534 532Q529.5 532 529.5 530Z" fill="#e6e6e6" stroke="#888" stroke-width=".9"/>
<path d="M522.5 527V531H527" stroke="#333" stroke-width=".9" fill="none"/>
<!-- physical material -->
<clipPath id="pm"><circle cx="530.5" cy="549.3" r="9.6"/></clipPath>
<circle cx="530.5" cy="549.3" r="9.6" fill="#f4f4f4"/>
<g clip-path="url(#pm)" fill="#555">
<rect x="520" y="539" width="4" height="4"/><rect x="528" y="539" width="4" height="4"/><rect x="536" y="539" width="4" height="4"/>
<rect x="524" y="543" width="4" height="4"/><rect x="532" y="543" width="4" height="4"/>
<rect x="520" y="547" width="4" height="4"/><rect x="528" y="547" width="4" height="4"/><rect x="536" y="547" width="4" height="4"/>
<rect x="524" y="551" width="4" height="4"/><rect x="532" y="551" width="4" height="4"/>
<rect x="520" y="555" width="4" height="4"/><rect x="528" y="555" width="4" height="4"/><rect x="536" y="555" width="4" height="4"/>
</g>
<circle cx="530.5" cy="549.3" r="9.3" fill="none" stroke="#555" stroke-width="1"/>
<!-- appearance -->
<g transform="translate(530.5 574.2)">
<path d="M0 0L0 -10A10 10 0 0 1 8.66 -5Z" fill="#f7a21b"/>
<path d="M0 0L8.66 -5A10 10 0 0 1 8.66 5Z" fill="#ef6a2a"/>
<path d="M0 0L8.66 5A10 10 0 0 1 0 10Z" fill="#d8479a"/>
<path d="M0 0L0 10A10 10 0 0 1 -8.66 5Z" fill="#6a4fd8"/>
<path d="M0 0L-8.66 5A10 10 0 0 1 -8.66 -5Z" fill="#2a8ae0"/>
<path d="M0 0L-8.66 -5A10 10 0 0 1 0 -10Z" fill="#3cc060"/>
</g>
<!-- lattice -->
<g fill="none" stroke="#5aa8e8" stroke-width="1.6">
<circle cx="527.5" cy="593.5" r="4.6"/><circle cx="535.5" cy="598.5" r="4.6"/><circle cx="527.5" cy="604" r="4.6"/>
</g>
<!-- compute all -->
<rect x="524.5" y="641.5" width="13" height="20" rx="2" fill="#6a6a6a"/>
<circle cx="531" cy="647" r="3.7" fill="#ee3030"/>
<circle cx="531" cy="655.8" r="4.6" fill="#fff"/><circle cx="531" cy="655.8" r="3.6" fill="#22b04a"/>
</svg>
<div class="t" style="left:521px;top:614px;font-family:'Liberation Serif',serif;font-style:italic;font-size:22px;color:#555">fx</div>
<svg style="left:722px;top:211px" width="6" height="16"><circle cx="3" cy="3" r="1.6" fill="#222"/><circle cx="3" cy="8" r="1.6" fill="#222"/><circle cx="3" cy="13" r="1.6" fill="#222"/></svg>
<!-- tooltip -->
<div class="a" style="left:749px;top:211px;width:420px;height:475px;background:#505050;border-radius:12px;box-shadow:1px 1px 1.5px rgba(0,0,0,.35)"></div>
<svg style="left:0;top:0" width="1200" height="700" viewBox="0 0 1200 700"><g>
<path d="M858 399.7L949 452L903.1 479C879 493 836.5 493 812.4 479L766 452Z" fill="#b6e3ef"/>
<path d="M766 452L812.4 479V584L766 557Z" fill="#dca68b"/>
<path d="M903.1 479L949 452V557L903.1 584Z" fill="#d4917f"/>
<path d="M812.4 479C836.5 493 879 493 903.1 479V584C879 598 836.5 598 812.4 584Z" fill="#ddb6de"/>
<path d="M858 452L812.4 479.0M812.4 479.0L812.4 584.0M858 452L817.1 481.5M817.1 481.5L817.1 586.5M858 452L822.2 483.6M822.2 483.6L822.2 588.6M858 452L827.7 485.4M827.7 485.4L827.7 590.4M858 452L833.4 486.9M833.4 486.9L833.4 591.9M858 452L839.3 488.0M839.3 488.0L839.3 593.0M858 452L845.3 488.8M845.3 488.8L845.3 593.8M858 452L851.5 489.3M851.5 489.3L851.5 594.3M858 452L857.8 489.5M857.8 489.5L857.8 594.5M858 452L864.0 489.3M864.0 489.3L864.0 594.3M858 452L870.2 488.8M870.2 488.8L870.2 593.8M858 452L876.2 488.0M876.2 488.0L876.2 593.0M858 452L882.2 486.9M882.2 486.9L882.2 591.9M858 452L887.8 485.4M887.8 485.4L887.8 590.4M858 452L893.3 483.6M893.3 483.6L893.3 588.6M858 452L898.4 481.5M898.4 481.5L898.4 586.5M858 452L903.1 479.0M903.1 479.0L903.1 584.0M858 399.7L858 452M766 452L858 452L949 452M812 479L858 452L903 479M766 504L812 531M949 504L903 531" stroke="#000" stroke-opacity=".09" stroke-width=".7" fill="none"/></g><g transform="translate(191 33)"><g>
<path d="M858 399.7L949 452L903.1 479C879 493 836.5 493 812.4 479L766 452Z" fill="#b6e3ef"/>
<path d="M766 452L812.4 479V584L766 557Z" fill="#dca68b"/>
<path d="M903.1 479L949 452V557L903.1 584Z" fill="#d4917f"/>
<path d="M812.4 479C836.5 493 879 493 903.1 479V584C879 598 836.5 598 812.4 584Z" fill="#ddb6de"/>
<path d="M812.4 479.0L812.4 584.0M815.5 480.7L815.5 585.7M818.8 482.2L818.8 587.2M822.2 483.6L822.2 588.6M825.8 484.8L825.8 589.8M829.5 485.9L829.5 590.9M833.4 486.9L833.4 591.9M837.3 487.7L837.3 592.7M841.3 488.3L841.3 593.3M845.3 488.8L845.3 593.8M849.4 489.2L849.4 594.2M853.6 489.4L853.6 594.4M857.8 489.5L857.8 594.5M861.9 489.4L861.9 594.4M866.1 489.2L866.1 594.2M870.2 488.8L870.2 593.8M874.2 488.3L874.2 593.3M878.2 487.7L878.2 592.7M882.2 486.9L882.2 591.9M886.0 485.9L886.0 590.9M889.7 484.8L889.7 589.8M893.3 483.6L893.3 588.6M896.7 482.2L896.7 587.2M900.0 480.7L900.0 585.7M903.1 479.0L903.1 584.0M812.4 492.1L817.1 494.6L822.2 496.7L827.7 498.5L833.4 500.0L839.3 501.1L845.3 502.0L851.5 502.5L857.8 502.6L864.0 502.5L870.2 502.0L876.2 501.1L882.2 500.0L887.8 498.5L893.3 496.7L898.4 494.6L903.1 492.1M812.4 505.2L817.1 507.7L822.2 509.8L827.7 511.6L833.4 513.1L839.3 514.3L845.3 515.1L851.5 515.6L857.8 515.8L864.0 515.6L870.2 515.1L876.2 514.3L882.2 513.1L887.8 511.6L893.3 509.8L898.4 507.7L903.1 505.2M812.4 518.4L817.1 520.8L822.2 523.0L827.7 524.8L833.4 526.2L839.3 527.4L845.3 528.2L851.5 528.7L857.8 528.9L864.0 528.7L870.2 528.2L876.2 527.4L882.2 526.2L887.8 524.8L893.3 523.0L898.4 520.8L903.1 518.4M812.4 531.5L817.1 534.0L822.2 536.1L827.7 537.9L833.4 539.4L839.3 540.5L845.3 541.3L851.5 541.8L857.8 542.0L864.0 541.8L870.2 541.3L876.2 540.5L882.2 539.4L887.8 537.9L893.3 536.1L898.4 534.0L903.1 531.5M812.4 544.6L817.1 547.1L822.2 549.2L827.7 551.0L833.4 552.5L839.3 553.6L845.3 554.5L851.5 555.0L857.8 555.1L864.0 555.0L870.2 554.5L876.2 553.6L882.2 552.5L887.8 551.0L893.3 549.2L898.4 547.1L903.1 544.6M812.4 557.8L817.1 560.2L822.2 562.3L827.7 564.1L833.4 565.6L839.3 566.8L845.3 567.6L851.5 568.1L857.8 568.2L864.0 568.1L870.2 567.6L876.2 566.8L882.2 565.6L887.8 564.1L893.3 562.3L898.4 560.2L903.1 557.8M812.4 570.9L817.1 573.3L822.2 575.5L827.7 577.3L833.4 578.8L839.3 579.9L845.3 580.7L851.5 581.2L857.8 581.4L864.0 581.2L870.2 580.7L876.2 579.9L882.2 578.8L887.8 577.3L893.3 575.5L898.4 573.3L903.1 570.9M777.5 445.5L823.4 482.8M869.4 406.2L823.4 482.8M789.0 438.9L834.8 486.1M880.8 412.8L834.8 486.1M800.5 432.4L846.1 488.2M892.1 419.3L846.1 488.2M812.0 425.9L857.5 489.0M903.5 425.8L857.5 489.0M823.5 419.3L868.9 488.2M914.9 432.4L868.9 488.2M835.0 412.8L880.2 486.1M926.2 438.9L880.2 486.1M846.5 406.2L891.6 482.8M937.6 445.5L891.6 482.8M766 467.0L812 494.0M949 467.0L903 494.0M772.6 455.9L772.6 560.9M909.6 475.1L909.6 580.1M766 482.0L812 509.0M949 482.0L903 509.0M779.1 459.7L779.1 564.7M916.1 471.3L916.1 576.3M766 497.0L812 524.0M949 497.0L903 524.0M785.7 463.6L785.7 568.6M922.7 467.4L922.7 572.4M766 512.0L812 539.0M949 512.0L903 539.0M792.3 467.4L792.3 572.4M929.3 463.6L929.3 568.6M766 527.0L812 554.0M949 527.0L903 554.0M798.9 471.3L798.9 576.3M935.9 459.7L935.9 564.7M766 542.0L812 569.0M949 542.0L903 569.0M805.4 475.1L805.4 580.1M942.4 455.9L942.4 560.9" stroke="#000" stroke-opacity=".12" stroke-width=".6" fill="none"/></g></g></svg>
<div class="tt" style="top:249px">Refines or coarsens faces on a mesh body or face</div>
<div class="tt" style="top:269px">groups.</div>
<div class="tt" style="top:309px">Select a mesh body or face groups on a mesh body,</div>
<div class="tt" style="top:329px">then adjust the settings to regenerate the mesh</div>
<div class="tt" style="top:349px">faces.</div>
<div class="tt" style="top:664px;letter-spacing:.3px">Press Ctrl+/ for more help.</div>

<div class="a" style="left:0;top:0;width:1px;height:1080px;background:#3b3b3b"></div>
</body></html>
